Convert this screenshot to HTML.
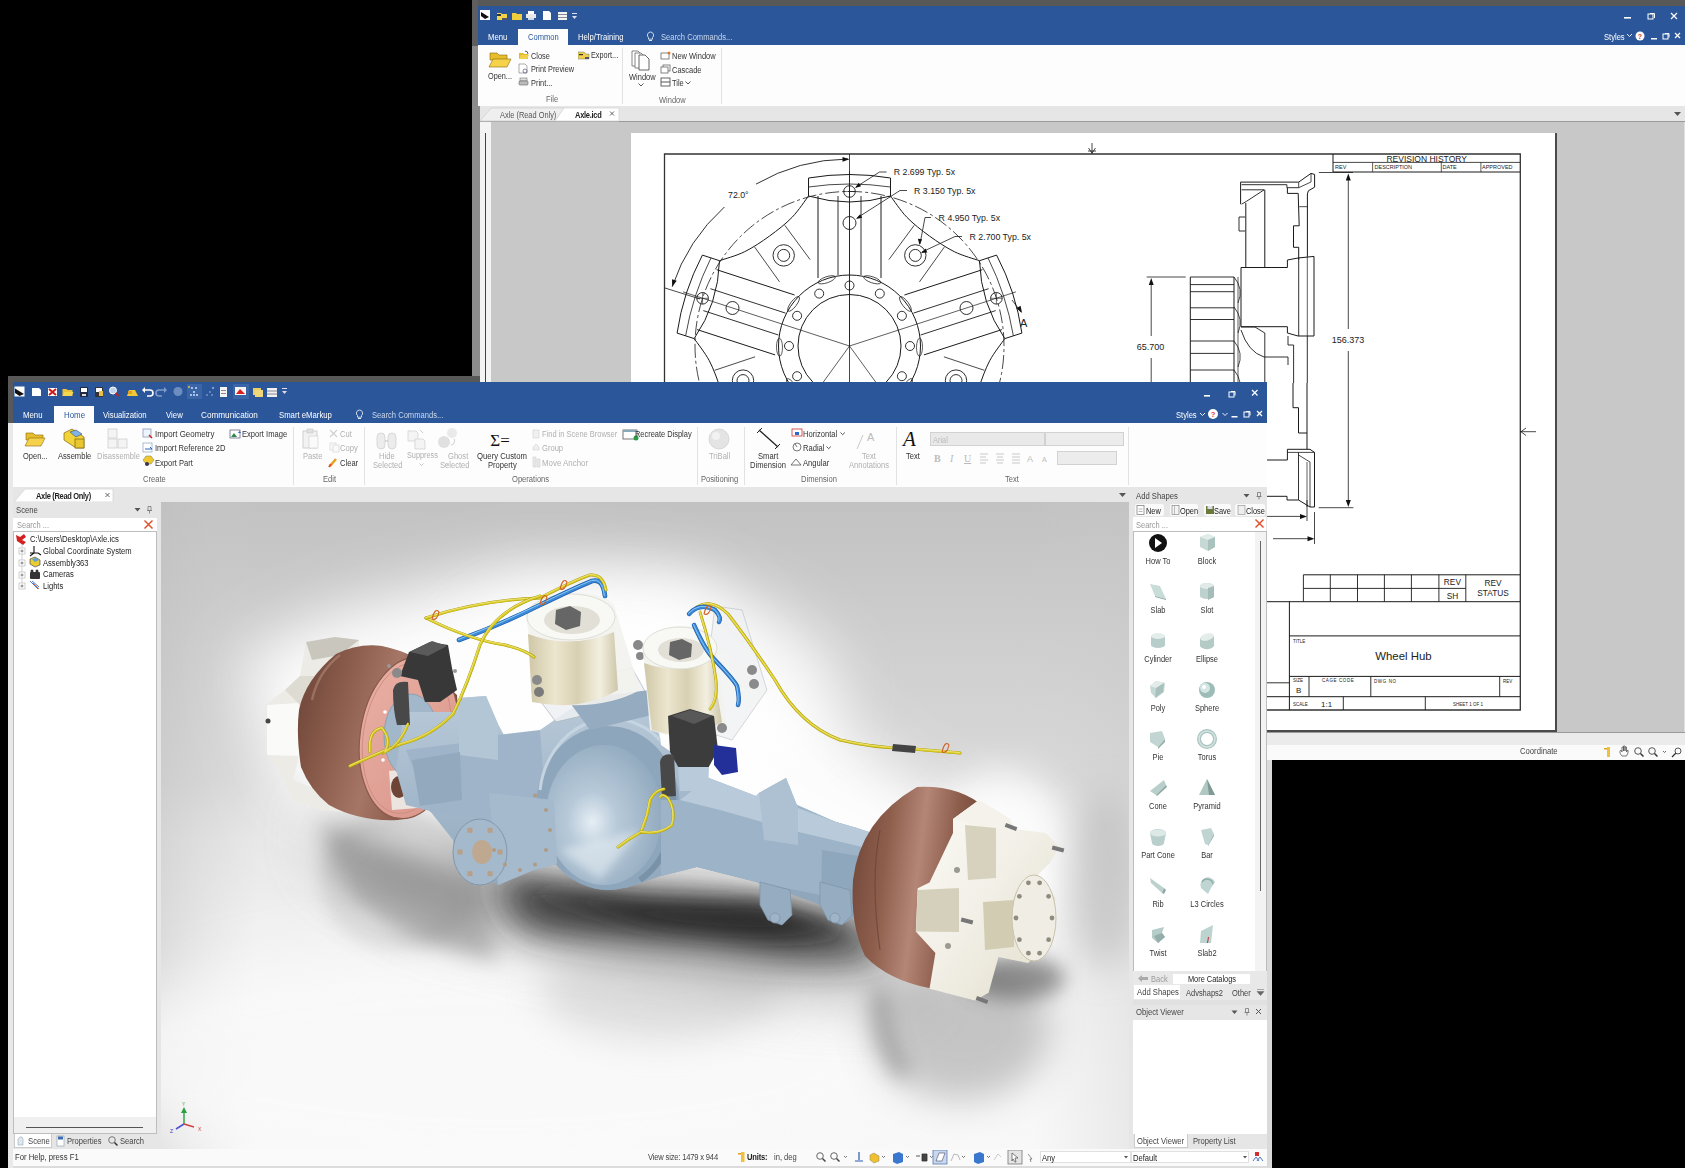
<!DOCTYPE html>
<html><head><meta charset="utf-8">
<style>
html,body{margin:0;padding:0}
body{width:1685px;height:1168px;background:#000;position:relative;overflow:hidden;font-family:"Liberation Sans",sans-serif;font-size:8px;color:#222}
.a{position:absolute}
.t{position:absolute;white-space:nowrap}
</style></head><body>
<div class="a" style="left:472px;top:0px;width:1213px;height:760px;background:#8c8c8c;"></div>
<div class="a" style="left:472px;top:0px;width:1213px;height:6px;background:#585858;"></div>
<div class="a" style="left:472px;top:0px;width:6px;height:46px;background:#5e5e5e;"></div>
<div class="a" style="left:478px;top:6px;width:1207px;height:39px;background:#2b579a;"></div>
<div class="a" style="left:478px;top:45px;width:1207px;height:61px;background:#fdfdfd;"></div>
<div class="a" style="left:480px;top:106px;width:1205px;height:15px;background:#e6e6e6;"></div>
<div class="a" style="left:480px;top:121px;width:1205px;height:1px;background:#9a9a9a;"></div>
<div class="a" style="left:480px;top:122px;width:1204px;height:610px;background:#c8c8c8;"></div>
<div class="a" style="left:1684px;top:122px;width:1px;height:610px;background:#e0e0e0;"></div>
<div class="a" style="left:480px;top:122px;width:11px;height:610px;background:#f4f4f4;"></div>
<div class="a" style="left:485px;top:133px;width:1px;height:599px;background:#444;"></div>
<div class="a" style="left:631px;top:133px;width:924px;height:598px;background:#fff;"></div>
<div class="a" style="left:1555px;top:133px;width:2px;height:599px;background:#4a4a4a;"></div>
<div class="a" style="left:631px;top:730px;width:926px;height:2px;background:#4a4a4a;"></div>
<div class="a" style="left:480px;top:732px;width:1205px;height:1px;background:#9a9a9a;"></div>
<div class="a" style="left:480px;top:733px;width:1205px;height:12px;background:#ebebeb;"></div>
<div class="a" style="left:480px;top:745px;width:1205px;height:15px;background:#fafafa;"></div>
<svg class="a" style="left:478px;top:8px" width="110" height="16" viewBox="0 0 110 16">
<rect x="2" y="2" width="10" height="10" fill="#fff"/><path d="M3 4 L11 9 L7 11 L3 8Z" fill="#111"/>
<path d="M19 5h4l1 1h5v6h-10z" fill="#f3d34a"/><rect x="19" y="6" width="4" height="2" fill="#333"/><rect x="24" y="10" width="5" height="2" fill="#556"/>
<path d="M34 5h4l1 1h5v6h-10z" fill="#f0cd3c"/>
<rect x="50" y="3" width="6" height="3" fill="#fff"/><rect x="48" y="6" width="10" height="4" fill="#e8e8e8"/><rect x="50" y="10" width="6" height="2" fill="#cfd8e8"/>
<path d="M65 3h6l2 2v7h-8z" fill="#fff"/>
<rect x="80" y="4" width="9" height="8" fill="#f2f2f2"/><rect x="80" y="6" width="9" height="1" fill="#889"/><rect x="80" y="9" width="9" height="1" fill="#889"/>
<rect x="94" y="5" width="5" height="1" fill="#dde"/><path d="M94 8h5l-2.5 3z" fill="#dde"/>
</svg>
<svg class="a" style="left:1620px;top:8px" width="65" height="40" viewBox="0 0 65 40">
<rect x="4" y="9" width="7" height="1.6" fill="#fff"/>
<rect x="28" y="6" width="5" height="5" fill="none" stroke="#fff" stroke-width="1"/><path d="M30 5.5h4.5v4.5" fill="none" stroke="#fff"/>
<path d="M51 5l6 6M57 5l-6 6" stroke="#fff" stroke-width="1.2"/>
<path d="M7 26l2.5 2.5 2.5-2.5" fill="none" stroke="#fff" stroke-width="0.9"/>
<circle cx="20" cy="28" r="4.5" fill="#fff"/><text x="20" y="31" font-size="7" text-anchor="middle" fill="#d33" font-family="Liberation Sans" font-weight="bold">?</text>
<rect x="31" y="30" width="6" height="1.5" fill="#fff"/>
<rect x="43" y="26" width="5" height="5" fill="none" stroke="#fff" stroke-width="1"/><path d="M45 25.5h4v4" fill="none" stroke="#fff"/>
<path d="M55 25l5 5M60 25l-5 5" stroke="#fff" stroke-width="1.2"/>
</svg>
<div class="t" style="left:1604px;top:31.9px;font-size:8.51px;line-height:10px;color:#fff;transform:scaleX(0.8929);transform-origin:0 50%;">Styles</div>
<div class="t" style="left:488px;top:31.9px;font-size:8.62px;line-height:10px;color:#fff;transform:scaleX(0.8929);transform-origin:0 50%;">Menu</div>
<div class="a" style="left:518px;top:29px;width:50px;height:16px;background:#fdfdfd;"></div>
<div class="t" style="left:528px;top:32.2px;font-size:8.51px;line-height:10px;color:#2b579a;transform:scaleX(0.8929);transform-origin:0 50%;">Common</div>
<div class="t" style="left:578px;top:31.9px;font-size:8.62px;line-height:10px;color:#fff;transform:scaleX(0.8929);transform-origin:0 50%;">Help/Training</div>
<svg class="a" style="left:646px;top:31px" width="9" height="11"><path d="M4.5 1a3.2 3.2 0 0 1 2 5.6v1.6h-4v-1.6a3.2 3.2 0 0 1 2-5.6z" fill="none" stroke="#dfe6f3" stroke-width="0.9"/><rect x="3" y="9" width="3" height="1" fill="#dfe6f3"/></svg>
<div class="t" style="left:661px;top:31.9px;font-size:8.51px;line-height:10px;color:#c9d6ec;transform:scaleX(0.8929);transform-origin:0 50%;">Search Commands...</div>
<svg class="a" style="left:488px;top:50px" width="24" height="20" viewBox="0 0 24 20">
<path d="M2 3h7l2 2h8v5H2z" fill="#e7bd2c" stroke="#8a6a10" stroke-width="0.6"/>
<path d="M1 17l4-8h18l-4 8z" fill="#f5d24a" stroke="#8a6a10" stroke-width="0.6"/></svg>
<div class="t" style="left:488px;top:71.8px;font-size:8.18px;line-height:10px;color:#333;transform:scaleX(0.8929);transform-origin:0 50%;">Open...</div>
<svg class="a" style="left:518px;top:50px" width="12" height="40" viewBox="0 0 12 40">
<path d="M1 3h4l1 1h4v5H1z" fill="#e6bb2a"/><path d="M1 9l2-4h8l-2 4z" fill="#f3d04a"/><path d="M7 1a3 3 0 0 1 3 3" fill="none" stroke="#333" stroke-width="0.8"/>
<path d="M1 14h6l2 2v7H1z" fill="#fff" stroke="#888" stroke-width="0.7"/><circle cx="7" cy="21" r="2" fill="none" stroke="#557" stroke-width="0.7"/>
<rect x="2" y="28" width="7" height="3" fill="#ddd" stroke="#777" stroke-width="0.6"/><rect x="1" y="31" width="9" height="4" rx="1" fill="#bbb" stroke="#666" stroke-width="0.6"/>
</svg>
<div class="t" style="left:531px;top:50.7px;font-size:8.29px;line-height:10px;color:#333;transform:scaleX(0.8929);transform-origin:0 50%;">Close</div>
<div class="t" style="left:531px;top:64.5px;font-size:8.18px;line-height:10px;color:#333;transform:scaleX(0.8929);transform-origin:0 50%;">Print Preview</div>
<div class="t" style="left:531px;top:78.2px;font-size:8.29px;line-height:10px;color:#333;transform:scaleX(0.8929);transform-origin:0 50%;">Print...</div>
<svg class="a" style="left:578px;top:50px" width="12" height="10" viewBox="0 0 12 10">
<path d="M0 2h6l2 2h3v5H0z" fill="#f0d050" stroke="#776" stroke-width="0.5"/><rect x="1" y="4" width="4" height="1.2" fill="#333"/><rect x="7" y="7" width="4" height="2" fill="#556"/></svg>
<div class="t" style="left:590.5px;top:50.7px;font-size:8.18px;line-height:10px;color:#333;transform:scaleX(0.8929);transform-origin:0 50%;">Export...</div>
<div class="t" style="left:545.7px;top:94.2px;font-size:8.51px;line-height:10px;color:#666;transform:scaleX(0.8929);transform-origin:0 50%;">File</div>
<div class="a" style="left:622px;top:48px;width:1px;height:56px;background:#e2e2e2;"></div>
<svg class="a" style="left:630px;top:50px" width="24" height="22" viewBox="0 0 24 22">
<path d="M2 1h6l2 2v13H2z" fill="#fff" stroke="#666" stroke-width="0.8"/>
<path d="M5 3h6l2 2v13H5z" fill="#fff" stroke="#666" stroke-width="0.8"/>
<path d="M9 5h6l4 4v11H9z" fill="#fff" stroke="#555" stroke-width="0.9"/></svg>
<div class="t" style="left:628.5px;top:71.9px;font-size:8.40px;line-height:10px;color:#333;transform:scaleX(0.8929);transform-origin:0 50%;">Window</div>
<svg class="a" style="left:638px;top:83px" width="6" height="4"><path d="M0.5 0.5l2.5 2.5 2.5-2.5" fill="none" stroke="#444" stroke-width="0.9"/></svg>
<svg class="a" style="left:660px;top:50px" width="12" height="40" viewBox="0 0 12 40">
<rect x="1" y="3" width="8" height="6" fill="#fff" stroke="#666" stroke-width="0.8"/><circle cx="9" cy="3" r="1.5" fill="#e07a2a"/>
<rect x="3" y="15" width="7" height="6" fill="#fff" stroke="#666" stroke-width="0.8"/><rect x="1" y="17" width="7" height="6" fill="#fff" stroke="#666" stroke-width="0.8"/>
<rect x="1" y="28" width="9" height="8" fill="#fff" stroke="#555" stroke-width="0.9"/><rect x="1" y="31.5" width="9" height="1" fill="#555"/></svg>
<div class="t" style="left:671.6px;top:50.5px;font-size:8.40px;line-height:10px;color:#333;transform:scaleX(0.8929);transform-origin:0 50%;">New Window</div>
<div class="t" style="left:671.6px;top:64.5px;font-size:8.40px;line-height:10px;color:#333;transform:scaleX(0.8929);transform-origin:0 50%;">Cascade</div>
<div class="t" style="left:671.6px;top:78.2px;font-size:8.40px;line-height:10px;color:#333;transform:scaleX(0.8929);transform-origin:0 50%;">Tile</div>
<svg class="a" style="left:685px;top:81px" width="6" height="4"><path d="M0.5 0.5l2.5 2.5 2.5-2.5" fill="none" stroke="#444" stroke-width="0.9"/></svg>
<div class="t" style="left:658.5px;top:94.7px;font-size:8.40px;line-height:10px;color:#666;transform:scaleX(0.8929);transform-origin:0 50%;">Window</div>
<div class="a" style="left:721px;top:48px;width:1px;height:56px;background:#e2e2e2;"></div>
<svg class="a" style="left:478px;top:106px" width="150" height="16" viewBox="0 0 150 16">
<path d="M2 15L13 2H86L77 15z" fill="#efefef" stroke="#cfcfcf" stroke-width="0.8"/>
<path d="M77 15L86 2H141V15z" fill="#fff" stroke="#d8d8d8" stroke-width="0.8"/>
<path d="M132 5.5l4 4M136 5.5l-4 4" stroke="#555" stroke-width="0.9"/></svg>
<div class="t" style="left:500px;top:110.2px;font-size:8.29px;line-height:10px;color:#555;transform:scaleX(0.8929);transform-origin:0 50%;">Axle (Read Only)</div>
<div class="t" style="left:575px;top:110.2px;font-size:8.40px;line-height:10px;color:#222;transform:scaleX(0.8929);transform-origin:0 50%;font-weight:bold;letter-spacing:-0.3px">Axle.icd</div>
<svg class="a" style="left:1674px;top:112px" width="8" height="5"><path d="M0 0h7l-3.5 4z" fill="#555"/></svg>
<div class="t" style="left:1520px;top:746.4px;font-size:8.62px;line-height:10px;color:#444;transform:scaleX(0.8929);transform-origin:0 50%;">Coordinate</div>
<svg class="a" style="left:1600px;top:745px" width="85" height="14" viewBox="0 0 85 14">
<rect x="7" y="2" width="3" height="10" fill="#f0c040"/><rect x="4" y="3" width="3" height="1.5" fill="#e0a020"/>
<path d="M22 11c-2-2-3-5-1-6l1 2v-5h1.5v4v-5h1.5v5v-4h1.5v5l1-2c1 0 1 3-1 6z" fill="none" stroke="#555" stroke-width="0.8"/>
<circle cx="38" cy="6" r="3.3" fill="none" stroke="#555" stroke-width="1"/><path d="M40.5 8.5l3 3" stroke="#333" stroke-width="1.5"/>
<circle cx="52" cy="6" r="3.3" fill="none" stroke="#555" stroke-width="1"/><path d="M54.5 8.5l3 3" stroke="#333" stroke-width="1.5"/>
<path d="M63 6l1.5 1.5 1.5-1.5" fill="none" stroke="#444" stroke-width="0.8"/>
<circle cx="78" cy="6" r="3" fill="none" stroke="#555" stroke-width="1"/><path d="M76 8l-4 4" stroke="#333" stroke-width="1.3"/>
</svg>
<svg class="a" style="left:631px;top:133px" width="924" height="598" viewBox="631 133 924 598"><path d="M664.5 383.0 L664.5 154.0 L1520.3 154.0 L1520.3 710.0 L1267.0 710.0" fill="none" stroke="#333" stroke-width="1.3"/><path d="M1092.0 143.0 L1092.0 154.0" fill="none" stroke="#1a1a1a" stroke-width="0.8"/><path d="M1088.5 148 L1092 153 L1095.5 148" fill="none" stroke="#1a1a1a" stroke-width="0.8"/><path d="M1088.0 151.0 L1096.0 151.0" fill="none" stroke="#1a1a1a" stroke-width="0.8"/><path d="M1520.0 431.7 L1536.0 431.7" fill="none" stroke="#1a1a1a" stroke-width="0.8"/><path d="M1526 428 L1521 431.7 L1526 435.5" fill="none" stroke="#1a1a1a" stroke-width="0.8"/><path d="M672.2 286.7 A187 187 0 0 1 724.4 207.0" fill="none" stroke="#1a1a1a" stroke-width="0.9"/><path d="M756.0 184.1 A187 187 0 0 1 847.9 159.0" fill="none" stroke="#1a1a1a" stroke-width="0.9"/><path d="M849.5 159.3 L842.5 161.8 L842.5 156.9Z" fill="#111"/><path d="M672.2 286.7 L672.0 279.2 L676.7 280.8Z" fill="#111"/><text x="728" y="198.4" font-size="8.8" text-anchor="start" fill="#222" font-family="Liberation Sans" >72.0°</text><path d="M664.7 287.9 L700.0 299.0" fill="none" stroke="#1a1a1a" stroke-width="0.8"/><path d="M849.5 154.0 L849.5 383.0" fill="none" stroke="#1a1a1a" stroke-width="0.8"/><path d="M715.7 423.2 A154.5 154.5 0 1 1 983.3 423.2" fill="none" stroke="#1a1a1a" stroke-width="0.8" stroke-dasharray="14 3 3 3"/><circle cx="849.5" cy="346.0" r="71.0" fill="none" stroke="#1a1a1a" stroke-width="1.0"/><circle cx="849.5" cy="346.0" r="51.5" fill="none" stroke="#1a1a1a" stroke-width="1.0"/><circle cx="849.5" cy="285.5" r="4.5" fill="none" stroke="#1a1a1a" stroke-width="0.9"/><circle cx="879.8" cy="293.6" r="4.5" fill="none" stroke="#1a1a1a" stroke-width="0.9"/><circle cx="901.9" cy="315.8" r="4.5" fill="none" stroke="#1a1a1a" stroke-width="0.9"/><circle cx="910.0" cy="346.0" r="4.5" fill="none" stroke="#1a1a1a" stroke-width="0.9"/><circle cx="901.9" cy="376.2" r="4.5" fill="none" stroke="#1a1a1a" stroke-width="0.9"/><circle cx="879.8" cy="398.4" r="4.5" fill="none" stroke="#1a1a1a" stroke-width="0.9"/><circle cx="849.5" cy="406.5" r="4.5" fill="none" stroke="#1a1a1a" stroke-width="0.9"/><circle cx="819.2" cy="398.4" r="4.5" fill="none" stroke="#1a1a1a" stroke-width="0.9"/><circle cx="797.1" cy="376.2" r="4.5" fill="none" stroke="#1a1a1a" stroke-width="0.9"/><circle cx="789.0" cy="346.0" r="4.5" fill="none" stroke="#1a1a1a" stroke-width="0.9"/><circle cx="797.1" cy="315.8" r="4.5" fill="none" stroke="#1a1a1a" stroke-width="0.9"/><circle cx="819.2" cy="293.6" r="4.5" fill="none" stroke="#1a1a1a" stroke-width="0.9"/><ellipse cx="826.7" cy="279.8" rx="9" ry="3" transform="rotate(-19.0 826.7 279.8)" fill="none" stroke="#1a1a1a" stroke-width="0.7"/><ellipse cx="872.3" cy="279.8" rx="9" ry="3" transform="rotate(19.0 872.3 279.8)" fill="none" stroke="#1a1a1a" stroke-width="0.7"/><ellipse cx="905.4" cy="303.9" rx="9" ry="3" transform="rotate(53.0 905.4 303.9)" fill="none" stroke="#1a1a1a" stroke-width="0.7"/><ellipse cx="919.5" cy="347.2" rx="9" ry="3" transform="rotate(91.0 919.5 347.2)" fill="none" stroke="#1a1a1a" stroke-width="0.7"/><ellipse cx="906.8" cy="386.2" rx="9" ry="3" transform="rotate(125.0 906.8 386.2)" fill="none" stroke="#1a1a1a" stroke-width="0.7"/><ellipse cx="870.0" cy="412.9" rx="9" ry="3" transform="rotate(163.0 870.0 412.9)" fill="none" stroke="#1a1a1a" stroke-width="0.7"/><ellipse cx="829.0" cy="412.9" rx="9" ry="3" transform="rotate(197.0 829.0 412.9)" fill="none" stroke="#1a1a1a" stroke-width="0.7"/><ellipse cx="792.2" cy="386.2" rx="9" ry="3" transform="rotate(235.0 792.2 386.2)" fill="none" stroke="#1a1a1a" stroke-width="0.7"/><ellipse cx="779.5" cy="347.2" rx="9" ry="3" transform="rotate(269.0 779.5 347.2)" fill="none" stroke="#1a1a1a" stroke-width="0.7"/><ellipse cx="793.6" cy="303.9" rx="9" ry="3" transform="rotate(307.0 793.6 303.9)" fill="none" stroke="#1a1a1a" stroke-width="0.7"/><path d="M849.5 346.0 L849.5 171.0" fill="none" stroke="#1a1a1a" stroke-width="0.7"/><path d="M849.5 346.0 L1015.9 291.9" fill="none" stroke="#1a1a1a" stroke-width="0.7"/><path d="M849.5 346.0 L952.4 487.6" fill="none" stroke="#1a1a1a" stroke-width="0.7"/><path d="M849.5 346.0 L746.6 487.6" fill="none" stroke="#1a1a1a" stroke-width="0.7"/><path d="M849.5 346.0 L683.1 291.9" fill="none" stroke="#1a1a1a" stroke-width="0.7"/><path d="M818.0 278.0 L818.0 196.0" fill="none" stroke="#1a1a1a" stroke-width="1.0"/><path d="M881.0 278.0 L881.0 196.0" fill="none" stroke="#1a1a1a" stroke-width="1.0"/><path d="M838.0 275.0 L838.0 196.0" fill="none" stroke="#1a1a1a" stroke-width="0.9"/><path d="M861.0 275.0 L861.0 196.0" fill="none" stroke="#1a1a1a" stroke-width="0.9"/><path d="M808.5 196.0 L808.5 178.0" fill="none" stroke="#1a1a1a" stroke-width="1.0"/><path d="M890.5 196.0 L890.5 178.0" fill="none" stroke="#1a1a1a" stroke-width="1.0"/><path d="M808.5 178.0 Q849.5 171.0 890.5 178.0" fill="none" stroke="#1a1a1a" stroke-width="1.0"/><path d="M808.5 187.0 Q849.5 181.0 890.5 187.0" fill="none" stroke="#1a1a1a" stroke-width="0.8"/><path d="M808.5 196.0 Q849.5 208.0 890.5 196.0" fill="none" stroke="#1a1a1a" stroke-width="1.0"/><circle cx="849.5" cy="191.5" r="5.8" fill="none" stroke="#1a1a1a" stroke-width="0.9"/><path d="M843.7 191.5 L855.3 191.5" fill="none" stroke="#1a1a1a" stroke-width="0.6"/><path d="M849.5 185.7 L849.5 197.3" fill="none" stroke="#1a1a1a" stroke-width="0.6"/><circle cx="849.5" cy="223.0" r="6.5" fill="none" stroke="#1a1a1a" stroke-width="0.9"/><path d="M904.4 295.0 L982.4 269.7" fill="none" stroke="#1a1a1a" stroke-width="1.0"/><path d="M923.9 354.9 L1001.9 329.6" fill="none" stroke="#1a1a1a" stroke-width="1.0"/><path d="M913.5 313.1 L988.6 288.7" fill="none" stroke="#1a1a1a" stroke-width="0.9"/><path d="M920.6 335.0 L995.7 310.6" fill="none" stroke="#1a1a1a" stroke-width="0.9"/><path d="M979.5 260.7 L996.6 255.1" fill="none" stroke="#1a1a1a" stroke-width="1.0"/><path d="M1004.8 338.6 L1021.9 333.1" fill="none" stroke="#1a1a1a" stroke-width="1.0"/><path d="M996.6 255.1 Q1015.9 291.9 1021.9 333.1" fill="none" stroke="#1a1a1a" stroke-width="1.0"/><path d="M988.0 257.9 Q1006.4 295.0 1013.4 335.9" fill="none" stroke="#1a1a1a" stroke-width="0.8"/><path d="M979.5 260.7 Q980.7 303.4 1004.8 338.6" fill="none" stroke="#1a1a1a" stroke-width="1.0"/><circle cx="996.4" cy="298.3" r="5.8" fill="none" stroke="#1a1a1a" stroke-width="0.9"/><path d="M990.6 298.3 L1002.2 298.3" fill="none" stroke="#1a1a1a" stroke-width="0.6"/><path d="M996.4 292.5 L996.4 304.1" fill="none" stroke="#1a1a1a" stroke-width="0.6"/><circle cx="966.5" cy="308.0" r="6.5" fill="none" stroke="#1a1a1a" stroke-width="0.9"/><path d="M915.0 382.5 L963.2 448.8" fill="none" stroke="#1a1a1a" stroke-width="1.0"/><path d="M864.0 419.5 L912.2 485.9" fill="none" stroke="#1a1a1a" stroke-width="1.0"/><path d="M900.5 396.7 L947.0 460.6" fill="none" stroke="#1a1a1a" stroke-width="0.9"/><path d="M881.9 410.2 L928.4 474.1" fill="none" stroke="#1a1a1a" stroke-width="0.9"/><path d="M970.8 443.3 L981.4 457.8" fill="none" stroke="#1a1a1a" stroke-width="1.0"/><path d="M904.5 491.5 L915.1 506.0" fill="none" stroke="#1a1a1a" stroke-width="1.0"/><path d="M981.4 457.8 Q952.4 487.6 915.1 506.0" fill="none" stroke="#1a1a1a" stroke-width="1.0"/><path d="M976.1 450.5 Q946.5 479.5 909.8 498.7" fill="none" stroke="#1a1a1a" stroke-width="0.8"/><path d="M970.8 443.3 Q930.6 457.6 904.5 491.5" fill="none" stroke="#1a1a1a" stroke-width="1.0"/><circle cx="940.3" cy="471.0" r="5.8" fill="none" stroke="#1a1a1a" stroke-width="0.9"/><path d="M934.5 471.0 L946.1 471.0" fill="none" stroke="#1a1a1a" stroke-width="0.6"/><path d="M940.3 465.2 L940.3 476.8" fill="none" stroke="#1a1a1a" stroke-width="0.6"/><circle cx="921.8" cy="445.5" r="6.5" fill="none" stroke="#1a1a1a" stroke-width="0.9"/><path d="M835.0 419.5 L786.8 485.9" fill="none" stroke="#1a1a1a" stroke-width="1.0"/><path d="M784.0 382.5 L735.8 448.8" fill="none" stroke="#1a1a1a" stroke-width="1.0"/><path d="M817.1 410.2 L770.6 474.1" fill="none" stroke="#1a1a1a" stroke-width="0.9"/><path d="M798.5 396.7 L752.0 460.6" fill="none" stroke="#1a1a1a" stroke-width="0.9"/><path d="M794.5 491.5 L783.9 506.0" fill="none" stroke="#1a1a1a" stroke-width="1.0"/><path d="M728.2 443.3 L717.6 457.8" fill="none" stroke="#1a1a1a" stroke-width="1.0"/><path d="M783.9 506.0 Q746.6 487.6 717.6 457.8" fill="none" stroke="#1a1a1a" stroke-width="1.0"/><path d="M789.2 498.7 Q752.5 479.5 722.9 450.5" fill="none" stroke="#1a1a1a" stroke-width="0.8"/><path d="M794.5 491.5 Q768.4 457.6 728.2 443.3" fill="none" stroke="#1a1a1a" stroke-width="1.0"/><circle cx="758.7" cy="471.0" r="5.8" fill="none" stroke="#1a1a1a" stroke-width="0.9"/><path d="M752.9 471.0 L764.5 471.0" fill="none" stroke="#1a1a1a" stroke-width="0.6"/><path d="M758.7 465.2 L758.7 476.8" fill="none" stroke="#1a1a1a" stroke-width="0.6"/><circle cx="777.2" cy="445.5" r="6.5" fill="none" stroke="#1a1a1a" stroke-width="0.9"/><path d="M775.1 354.9 L697.1 329.6" fill="none" stroke="#1a1a1a" stroke-width="1.0"/><path d="M794.6 295.0 L716.6 269.7" fill="none" stroke="#1a1a1a" stroke-width="1.0"/><path d="M778.4 335.0 L703.3 310.6" fill="none" stroke="#1a1a1a" stroke-width="0.9"/><path d="M785.5 313.1 L710.4 288.7" fill="none" stroke="#1a1a1a" stroke-width="0.9"/><path d="M694.2 338.6 L677.1 333.1" fill="none" stroke="#1a1a1a" stroke-width="1.0"/><path d="M719.5 260.7 L702.4 255.1" fill="none" stroke="#1a1a1a" stroke-width="1.0"/><path d="M677.1 333.1 Q683.1 291.9 702.4 255.1" fill="none" stroke="#1a1a1a" stroke-width="1.0"/><path d="M685.6 335.9 Q692.6 295.0 711.0 257.9" fill="none" stroke="#1a1a1a" stroke-width="0.8"/><path d="M694.2 338.6 Q718.3 303.4 719.5 260.7" fill="none" stroke="#1a1a1a" stroke-width="1.0"/><circle cx="702.6" cy="298.3" r="5.8" fill="none" stroke="#1a1a1a" stroke-width="0.9"/><path d="M696.8 298.3 L708.4 298.3" fill="none" stroke="#1a1a1a" stroke-width="0.6"/><path d="M702.6 292.5 L702.6 304.1" fill="none" stroke="#1a1a1a" stroke-width="0.6"/><circle cx="732.5" cy="308.0" r="6.5" fill="none" stroke="#1a1a1a" stroke-width="0.9"/><path d="M890.5 196.0 C893.2 199.5 900.4 210.5 906.8 217.2 C913.3 223.9 921.5 230.2 929.4 236.0 C937.3 241.7 945.9 247.5 954.3 251.7 C962.6 255.8 975.3 259.2 979.5 260.7" fill="none" stroke="#1a1a1a" stroke-width="1.0"/><circle cx="915.3" cy="255.4" r="10.7" fill="none" stroke="#1a1a1a" stroke-width="0.9"/><circle cx="915.3" cy="255.4" r="6.0" fill="none" stroke="#1a1a1a" stroke-width="0.9"/><path d="M919.5 281.8 L944.3 247.1" fill="none" stroke="#1a1a1a" stroke-width="0.8"/><path d="M888.9 259.6 L914.2 225.3" fill="none" stroke="#1a1a1a" stroke-width="0.8"/><path d="M1004.8 338.6 C1002.3 342.3 994.1 352.5 989.7 360.7 C985.4 369.0 981.9 378.7 978.8 388.0 C975.8 397.3 972.9 407.3 971.6 416.5 C970.3 425.7 971.0 438.8 970.8 443.3" fill="none" stroke="#1a1a1a" stroke-width="1.0"/><circle cx="956.0" cy="380.6" r="10.7" fill="none" stroke="#1a1a1a" stroke-width="0.9"/><circle cx="956.0" cy="380.6" r="6.0" fill="none" stroke="#1a1a1a" stroke-width="0.9"/><path d="M932.2 392.8 L972.8 405.6" fill="none" stroke="#1a1a1a" stroke-width="0.8"/><path d="M943.9 356.8 L984.3 370.3" fill="none" stroke="#1a1a1a" stroke-width="0.8"/><path d="M904.5 491.5 C900.2 490.2 888.0 485.5 878.8 483.9 C869.6 482.3 859.3 482.0 849.5 482.0 C839.7 482.0 829.4 482.3 820.2 483.9 C811.0 485.5 798.8 490.2 794.5 491.5" fill="none" stroke="#1a1a1a" stroke-width="1.0"/><circle cx="849.5" cy="458.0" r="10.7" fill="none" stroke="#1a1a1a" stroke-width="0.9"/><circle cx="849.5" cy="458.0" r="6.0" fill="none" stroke="#1a1a1a" stroke-width="0.9"/><path d="M830.6 439.1 L830.9 481.7" fill="none" stroke="#1a1a1a" stroke-width="0.8"/><path d="M868.4 439.1 L868.1 481.7" fill="none" stroke="#1a1a1a" stroke-width="0.8"/><path d="M728.2 443.3 C728.0 438.8 728.7 425.7 727.4 416.5 C726.1 407.3 723.2 397.3 720.2 388.0 C717.1 378.7 713.6 369.0 709.3 360.7 C704.9 352.5 696.7 342.3 694.2 338.6" fill="none" stroke="#1a1a1a" stroke-width="1.0"/><circle cx="743.0" cy="380.6" r="10.7" fill="none" stroke="#1a1a1a" stroke-width="0.9"/><circle cx="743.0" cy="380.6" r="6.0" fill="none" stroke="#1a1a1a" stroke-width="0.9"/><path d="M755.1 356.8 L714.7 370.3" fill="none" stroke="#1a1a1a" stroke-width="0.8"/><path d="M766.8 392.8 L726.2 405.6" fill="none" stroke="#1a1a1a" stroke-width="0.8"/><path d="M719.5 260.7 C723.7 259.2 736.4 255.8 744.7 251.7 C753.1 247.5 761.7 241.7 769.6 236.0 C777.5 230.2 785.7 223.9 792.2 217.2 C798.6 210.5 805.8 199.5 808.5 196.0" fill="none" stroke="#1a1a1a" stroke-width="1.0"/><circle cx="783.7" cy="255.4" r="10.7" fill="none" stroke="#1a1a1a" stroke-width="0.9"/><circle cx="783.7" cy="255.4" r="6.0" fill="none" stroke="#1a1a1a" stroke-width="0.9"/><path d="M810.1 259.6 L784.8 225.3" fill="none" stroke="#1a1a1a" stroke-width="0.8"/><path d="M779.5 281.8 L754.7 247.1" fill="none" stroke="#1a1a1a" stroke-width="0.8"/><text x="893.7" y="175.3" font-size="8.8" text-anchor="start" fill="#222" font-family="Liberation Sans" >R 2.699 Typ. 5x</text><text x="914" y="193.7" font-size="8.8" text-anchor="start" fill="#222" font-family="Liberation Sans" >R 3.150 Typ. 5x</text><text x="938.6" y="221.2" font-size="8.8" text-anchor="start" fill="#222" font-family="Liberation Sans" >R 4.950 Typ. 5x</text><text x="969.5" y="240.2" font-size="8.8" text-anchor="start" fill="#222" font-family="Liberation Sans" >R 2.700 Typ. 5x</text><path d="M886.6 172.0 L879.5 172.0 L856.0 187.0" fill="none" stroke="#1a1a1a" stroke-width="0.8"/><path d="M855.0 188.0 L858.7 182.8 L861.1 186.3Z" fill="#111"/><path d="M907.0 190.5 L900.0 190.5 L857.0 218.0" fill="none" stroke="#1a1a1a" stroke-width="0.8"/><path d="M856.0 219.0 L860.1 214.2 L862.2 217.8Z" fill="#111"/><path d="M931.0 217.5 L925.0 217.5 L920.0 244.0" fill="none" stroke="#1a1a1a" stroke-width="0.8"/><path d="M919.5 245.0 L917.9 238.8 L922.1 239.2Z" fill="#111"/><path d="M962.0 236.5 L955.0 236.5 L922.0 252.0" fill="none" stroke="#1a1a1a" stroke-width="0.8"/><path d="M921.0 253.0 L925.6 248.6 L927.3 252.4Z" fill="#111"/><text x="1020" y="327.0" font-size="11" text-anchor="start" fill="#222" font-family="Liberation Sans" >A</text><path d="M1012.0 300.0 L1021.0 312.0" fill="none" stroke="#1a1a1a" stroke-width="0.8"/><path d="M1022.0 313.0 L1016.4 308.2 L1020.6 305.7Z" fill="#111"/><path d="M1240.6 204.2 L1240.6 182.1 L1298.7 182.1 L1311.0 173.4 L1314.6 174.4 L1314.6 187.2 L1308.4 190.8 L1307.4 193.9 L1307.4 256.6" fill="none" stroke="#1a1a1a" stroke-width="1.0"/><path d="M1298.7 182.1 L1298.7 187.7" fill="none" stroke="#1a1a1a" stroke-width="0.8"/><path d="M1311.0 173.4 L1311.0 182.0 L1298.7 187.7" fill="none" stroke="#1a1a1a" stroke-width="0.8"/><path d="M1241.6 184.7 L1286.9 184.7 L1286.9 187.7 L1298.7 187.7" fill="none" stroke="#1a1a1a" stroke-width="0.9"/><path d="M1287.4 187.7 L1287.4 193.4 L1298.2 193.4 L1299.2 225.8 L1293.5 225.8 L1293.5 247.3 L1298.7 247.3 L1298.7 259.7" fill="none" stroke="#1a1a1a" stroke-width="1.0"/><path d="M1299.2 206.7 L1307.4 206.7" fill="none" stroke="#1a1a1a" stroke-width="0.8"/><path d="M1241.6 189.8 L1264.2 189.8 L1246.8 201.1 L1241.6 204.2" fill="none" stroke="#1a1a1a" stroke-width="0.9"/><path d="M1245.8 203.0 L1245.8 267.4" fill="none" stroke="#1a1a1a" stroke-width="1.0"/><path d="M1264.8 189.8 L1264.8 267.4" fill="none" stroke="#1a1a1a" stroke-width="1.0"/><path d="M1245.2 217.0 L1239.0 217.0 L1239.0 231.0 L1245.2 231.0" fill="none" stroke="#1a1a1a" stroke-width="0.9"/><path d="M1241.0 267.5 L1287.4 267.5 L1287.4 260.0 L1298.0 258.0 L1314.0 256.4 L1314.0 336.0 L1298.0 336.0 L1287.4 333.0 L1287.4 326.7 L1241.0 326.7 L1241.0 267.5" fill="none" stroke="#1a1a1a" stroke-width="1.0"/><path d="M1298.7 258.0 L1298.7 336.0" fill="none" stroke="#1a1a1a" stroke-width="0.9"/><path d="M1307.3 256.4 L1307.3 336.0" fill="none" stroke="#1a1a1a" stroke-width="0.7"/><path d="M1190.3 277.0 L1234.0 277.0" fill="none" stroke="#1a1a1a" stroke-width="0.9"/><path d="M1190.3 284.6 L1234.0 284.6" fill="none" stroke="#1a1a1a" stroke-width="0.9"/><path d="M1190.3 291.7 L1234.0 291.7" fill="none" stroke="#1a1a1a" stroke-width="0.9"/><path d="M1190.3 307.8 L1234.0 307.8" fill="none" stroke="#1a1a1a" stroke-width="0.9"/><path d="M1190.3 319.5 L1234.0 319.5" fill="none" stroke="#1a1a1a" stroke-width="0.9"/><path d="M1190.3 341.0 L1234.0 341.0" fill="none" stroke="#1a1a1a" stroke-width="0.9"/><path d="M1190.3 353.4 L1234.0 353.4" fill="none" stroke="#1a1a1a" stroke-width="0.9"/><path d="M1190.3 370.0 L1234.0 370.0" fill="none" stroke="#1a1a1a" stroke-width="0.9"/><path d="M1190.3 277.0 L1190.3 383.0" fill="none" stroke="#1a1a1a" stroke-width="1.0"/><path d="M1234.0 277.0 L1234.0 383.0" fill="none" stroke="#1a1a1a" stroke-width="1.0"/><path d="M1238.0 277.0 L1238.0 383.0" fill="none" stroke="#1a1a1a" stroke-width="0.7"/><path d="M1234 277 Q1244 289 1238 303" fill="none" stroke="#1a1a1a" stroke-width="0.8"/><path d="M1234 307 Q1244 319 1238 333" fill="none" stroke="#1a1a1a" stroke-width="0.8"/><path d="M1234 341 Q1244 353 1238 367" fill="none" stroke="#1a1a1a" stroke-width="0.8"/><path d="M1234 370 Q1244 382 1238 396" fill="none" stroke="#1a1a1a" stroke-width="0.8"/><path d="M1241.0 327.0 L1255.0 327.0 L1264.8 333.0 L1264.8 383.0" fill="none" stroke="#1a1a1a" stroke-width="0.9"/><path d="M1241 330 Q1248 352 1264 357 L1288 357 L1288 365" fill="none" stroke="#1a1a1a" stroke-width="0.9"/><path d="M1288.0 336.0 L1288.0 345.0 L1293.6 345.0 L1293.6 383.0" fill="none" stroke="#1a1a1a" stroke-width="0.9"/><path d="M1307.3 336.0 L1307.3 383.0" fill="none" stroke="#1a1a1a" stroke-width="0.9"/><path d="M1293.0 383.0 L1293.0 407.7 L1298.5 407.7 L1298.5 433.0 L1307.0 433.0 L1307.0 383.0" fill="none" stroke="#1a1a1a" stroke-width="1.0"/><path d="M1307.0 433.0 L1307.0 449.3" fill="none" stroke="#1a1a1a" stroke-width="1.0"/><path d="M1267.0 460.0 L1287.4 460.0 L1287.4 449.3 L1310.0 449.3 L1314.5 452.4 L1314.5 507.0 L1310.0 507.0" fill="none" stroke="#1a1a1a" stroke-width="1.0"/><path d="M1287.4 452.4 L1314.5 452.4" fill="none" stroke="#1a1a1a" stroke-width="0.8"/><path d="M1298.5 452.4 L1298.5 500.0" fill="none" stroke="#1a1a1a" stroke-width="0.9"/><path d="M1298.5 455.0 L1310.0 462.0 L1310.0 507.0" fill="none" stroke="#1a1a1a" stroke-width="0.8"/><path d="M1307.0 462.0 L1307.0 507.0" fill="none" stroke="#1a1a1a" stroke-width="0.7"/><path d="M1267.0 496.3 L1287.0 496.3 L1287.0 500.0 L1298.5 500.0 L1310.0 507.0" fill="none" stroke="#1a1a1a" stroke-width="1.0"/><path d="M1146.7 277.0 L1185.7 277.0" fill="none" stroke="#1a1a1a" stroke-width="0.8"/><path d="M1151.2 283.0 L1151.2 336.0" fill="none" stroke="#1a1a1a" stroke-width="0.8"/><path d="M1151.2 358.0 L1151.2 383.0" fill="none" stroke="#1a1a1a" stroke-width="0.8"/><path d="M1151.2 278.0 L1153.7 285.0 L1148.8 285.0Z" fill="#111"/><text x="1150.5" y="350.4" font-size="9" text-anchor="middle" fill="#222" font-family="Liberation Sans" >65.700</text><path d="M1318.8 172.5 L1353.0 172.5" fill="none" stroke="#1a1a1a" stroke-width="0.8"/><path d="M1348.3 179.0 L1348.3 329.0" fill="none" stroke="#1a1a1a" stroke-width="0.8"/><path d="M1348.3 351.0 L1348.3 500.0" fill="none" stroke="#1a1a1a" stroke-width="0.8"/><path d="M1348.3 173.5 L1350.8 180.5 L1345.8 180.5Z" fill="#111"/><path d="M1348.3 507.0 L1345.8 500.0 L1350.8 500.0Z" fill="#111"/><text x="1348" y="343.2" font-size="9" text-anchor="middle" fill="#222" font-family="Liberation Sans" >156.373</text><path d="M1318.6 507.7 L1353.4 507.7" fill="none" stroke="#1a1a1a" stroke-width="0.8"/><path d="M1267.0 516.4 L1301.0 516.4" fill="none" stroke="#1a1a1a" stroke-width="0.8"/><path d="M1307.0 516.4 L1300.0 518.9 L1300.0 513.9Z" fill="#111"/><path d="M1307.0 500.0 L1307.0 521.0" fill="none" stroke="#1a1a1a" stroke-width="0.8"/><path d="M1273.0 538.7 L1308.0 538.7" fill="none" stroke="#1a1a1a" stroke-width="0.8"/><path d="M1314.5 538.7 L1307.5 541.2 L1307.5 536.2Z" fill="#111"/><path d="M1314.5 512.0 L1314.5 544.0" fill="none" stroke="#1a1a1a" stroke-width="0.8"/><path d="M1333.0 172.0 L1333.0 154.0" fill="none" stroke="#1a1a1a" stroke-width="1.0"/><path d="M1333.0 162.4 L1520.0 162.4" fill="none" stroke="#1a1a1a" stroke-width="0.8"/><path d="M1333.0 172.0 L1520.0 172.0" fill="none" stroke="#1a1a1a" stroke-width="1.0"/><path d="M1372.6 162.4 L1372.6 172.0" fill="none" stroke="#1a1a1a" stroke-width="0.7"/><path d="M1441.3 162.4 L1441.3 172.0" fill="none" stroke="#1a1a1a" stroke-width="0.7"/><path d="M1480.9 162.4 L1480.9 172.0" fill="none" stroke="#1a1a1a" stroke-width="0.7"/><text x="1426.7" y="161.5" font-size="8.4" text-anchor="middle" fill="#222" font-family="Liberation Sans" textLength="80.5" lengthAdjust="spacingAndGlyphs">REVISION HISTORY</text><text x="1335" y="169.4" font-size="5.5" text-anchor="start" fill="#222" font-family="Liberation Sans" >REV</text><text x="1374.5" y="169.4" font-size="5.5" text-anchor="start" fill="#222" font-family="Liberation Sans" >DESCRIPTION</text><text x="1442.5" y="169.4" font-size="5.5" text-anchor="start" fill="#222" font-family="Liberation Sans" >DATE</text><text x="1482" y="169.4" font-size="5.5" text-anchor="start" fill="#222" font-family="Liberation Sans" >APPROVED</text><path d="M1303.4 574.8 L1520.0 574.8" fill="none" stroke="#1a1a1a" stroke-width="1.0"/><path d="M1303.4 588.4 L1465.8 588.4" fill="none" stroke="#1a1a1a" stroke-width="0.9"/><path d="M1267.0 601.7 L1520.0 601.7" fill="none" stroke="#1a1a1a" stroke-width="1.0"/><path d="M1303.4 574.8 L1303.4 601.7" fill="none" stroke="#1a1a1a" stroke-width="0.9"/><path d="M1330.3 574.8 L1330.3 601.7" fill="none" stroke="#1a1a1a" stroke-width="0.9"/><path d="M1357.5 574.8 L1357.5 601.7" fill="none" stroke="#1a1a1a" stroke-width="0.9"/><path d="M1384.4 574.8 L1384.4 601.7" fill="none" stroke="#1a1a1a" stroke-width="0.9"/><path d="M1411.4 574.8 L1411.4 601.7" fill="none" stroke="#1a1a1a" stroke-width="0.9"/><path d="M1438.9 574.8 L1438.9 601.7" fill="none" stroke="#1a1a1a" stroke-width="0.9"/><path d="M1465.8 574.8 L1465.8 601.7" fill="none" stroke="#1a1a1a" stroke-width="0.9"/><text x="1452.4" y="585.0" font-size="8.3" text-anchor="middle" fill="#222" font-family="Liberation Sans" >REV</text><text x="1452.4" y="598.5" font-size="8.3" text-anchor="middle" fill="#222" font-family="Liberation Sans" >SH</text><text x="1493" y="586.0" font-size="8.3" text-anchor="middle" fill="#222" font-family="Liberation Sans" >REV</text><text x="1493" y="596.0" font-size="8.3" text-anchor="middle" fill="#222" font-family="Liberation Sans" >STATUS</text><path d="M1289.4 601.7 L1289.4 710.0" fill="none" stroke="#1a1a1a" stroke-width="1.0"/><path d="M1289.4 635.9 L1520.0 635.9" fill="none" stroke="#1a1a1a" stroke-width="1.0"/><text x="1293" y="642.9" font-size="4.5" text-anchor="start" fill="#222" font-family="Liberation Sans" >TITLE</text><text x="1403.4" y="660.1" font-size="11.4" text-anchor="middle" fill="#222" font-family="Liberation Sans" >Wheel Hub</text><path d="M1289.4 676.4 L1520.0 676.4" fill="none" stroke="#1a1a1a" stroke-width="1.0"/><path d="M1267.0 682.8 L1289.4 682.8" fill="none" stroke="#1a1a1a" stroke-width="0.9"/><path d="M1267.0 696.7 L1520.0 696.7" fill="none" stroke="#1a1a1a" stroke-width="1.0"/><path d="M1309.0 676.4 L1309.0 696.7" fill="none" stroke="#1a1a1a" stroke-width="0.9"/><path d="M1370.8 676.4 L1370.8 696.7" fill="none" stroke="#1a1a1a" stroke-width="0.9"/><path d="M1499.7 676.4 L1499.7 696.7" fill="none" stroke="#1a1a1a" stroke-width="0.9"/><text x="1293" y="682.2" font-size="4.5" text-anchor="start" fill="#222" font-family="Liberation Sans" >SIZE</text><text x="1296" y="692.9" font-size="8" text-anchor="start" fill="#222" font-family="Liberation Sans" >B</text><text x="1322" y="681.9" font-size="4.5" text-anchor="start" fill="#222" font-family="Liberation Sans" letter-spacing="0.6">CAGE CODE</text><text x="1374" y="682.6" font-size="4.5" text-anchor="start" fill="#222" font-family="Liberation Sans" letter-spacing="0.6">DWG NO</text><text x="1503" y="682.6" font-size="4.5" text-anchor="start" fill="#222" font-family="Liberation Sans" >REV</text><path d="M1343.3 696.7 L1343.3 710.0" fill="none" stroke="#1a1a1a" stroke-width="0.9"/><path d="M1425.3 696.7 L1425.3 710.0" fill="none" stroke="#1a1a1a" stroke-width="0.9"/><text x="1293" y="705.6" font-size="4.5" text-anchor="start" fill="#222" font-family="Liberation Sans" >SCALE</text><text x="1321" y="706.9" font-size="8" text-anchor="start" fill="#222" font-family="Liberation Sans" >1:1</text><text x="1453" y="705.6" font-size="4.5" text-anchor="start" fill="#222" font-family="Liberation Sans" >SHEET 1  OF  1</text></svg>
<div class="a" style="left:8px;top:376px;width:472px;height:6px;background:#585858;"></div>
<div class="a" style="left:8px;top:376px;width:5px;height:47px;background:#585858;"></div>
<div class="a" style="left:8px;top:423px;width:5px;height:745px;background:#e9e9e9;"></div>
<div class="a" style="left:1267px;top:760px;width:5px;height:408px;background:#dadada;"></div>
<div class="a" style="left:13px;top:382px;width:1254px;height:41px;background:#2b579a;"></div>
<div class="a" style="left:13px;top:423px;width:1254px;height:64px;background:#fdfdfd;"></div>
<div class="a" style="left:13px;top:487px;width:1254px;height:15px;background:#e6e6e6;"></div>
<div class="a" style="left:13px;top:502px;width:1254px;height:647px;background:#e6e6e6;"></div>
<svg class="a" style="left:13px;top:384px" width="280" height="16" viewBox="0 0 280 16">
<rect x="1.5" y="2.5" width="10" height="10" fill="#fff"/><path d="M2 4.5 L11 10 L6.5 12 L2 9Z" fill="#111"/>
<path d="M19 4h7l2 2v6h-9z" fill="#fff"/>
<rect x="35" y="4" width="9" height="8" fill="#fff"/><path d="M36 5l7 6M43 5l-7 6" stroke="#d01818" stroke-width="2"/>
<path d="M49.5 5h4l1 1h5v6h-10z" fill="#e9c43a"/><path d="M49.5 12l2-4h9l-2 4z" fill="#f5d650"/>
<rect x="67" y="3" width="8" height="10" rx="1" fill="#222a44"/><rect x="68" y="4" width="6" height="4" fill="#fff"/><rect x="69" y="10" width="4" height="2" fill="#ddd"/>
<rect x="82" y="3" width="8" height="10" rx="1" fill="#333"/><rect x="83" y="4" width="6" height="4" fill="#fff"/><rect x="86" y="7" width="4" height="5" fill="#e7c14a"/>
<circle cx="100" cy="6.5" r="3.5" fill="#bcd3f0" stroke="#fff" stroke-width="1"/><path d="M102.5 9l3 3" stroke="#c02020" stroke-width="1.8"/>
<path d="M114 12l2-6h6l3 6z" fill="#f0c93a"/><rect x="115" y="7" width="4" height="3" fill="#e0a020"/>
<path d="M131 6h6a3 3 0 0 1 0 6h-3" fill="none" stroke="#fff" stroke-width="1.6"/><path d="M129 6l3-3v6z" fill="#fff"/>
<path d="M152 6h-6a3 3 0 0 0 0 6h3" fill="none" stroke="#7f9ccb" stroke-width="1.6"/><path d="M154 6l-3-3v6z" fill="#7f9ccb"/>
<circle cx="165" cy="7.5" r="4.5" fill="#6d8cc0"/>
<rect x="174" y="0" width="15" height="15" fill="#3a66a8"/><g fill="#cfe0f5"><circle cx="179" cy="4" r="1"/><circle cx="183" cy="4" r="1"/><circle cx="181" cy="8" r="1"/><circle cx="178" cy="11" r="1"/><circle cx="181" cy="11" r="1"/><circle cx="184" cy="11" r="1"/></g><circle cx="176" cy="3" r="1" fill="#f0c040"/>
<g fill="#7f9ccb"><circle cx="194" cy="11" r="0.9"/><circle cx="197" cy="8" r="0.9"/><circle cx="199" cy="11" r="0.9"/><circle cx="200" cy="4" r="1.2"/></g>
<rect x="207" y="3" width="7" height="10" fill="#f4f4f4"/><rect x="208" y="6" width="5" height="1" fill="#889"/><rect x="208" y="9" width="5" height="1" fill="#889"/>
<rect x="220" y="0" width="16" height="15" fill="#3a66a8"/><rect x="222" y="3" width="11" height="8" fill="#f4f4f4"/><path d="M223 10l4-5 5 5" fill="#d82020"/>
<rect x="240" y="4" width="8" height="7" fill="#e9cf6a"/><rect x="242" y="6" width="8" height="7" fill="#f0d87a"/>
<rect x="254" y="4" width="10" height="9" fill="#f0f0f0"/><rect x="254" y="6.5" width="10" height="1" fill="#889"/><rect x="254" y="9.5" width="10" height="1" fill="#889"/>
<rect x="269" y="4" width="5" height="1" fill="#dde"/><path d="M269 7h5l-2.5 3z" fill="#dde"/>
</svg>
<div class="t" style="left:22.7px;top:409.8px;font-size:8.74px;line-height:10px;color:#fff;transform:scaleX(0.8929);transform-origin:0 50%;">Menu</div>
<div class="a" style="left:54px;top:406px;width:40px;height:17px;background:#fdfdfd;"></div>
<div class="t" style="left:63.6px;top:410.0px;font-size:8.85px;line-height:10px;color:#2b579a;transform:scaleX(0.8929);transform-origin:0 50%;">Home</div>
<div class="t" style="left:103.4px;top:409.8px;font-size:8.74px;line-height:10px;color:#fff;transform:scaleX(0.8929);transform-origin:0 50%;">Visualization</div>
<div class="t" style="left:165.7px;top:409.8px;font-size:8.74px;line-height:10px;color:#fff;transform:scaleX(0.8929);transform-origin:0 50%;">View</div>
<div class="t" style="left:201.4px;top:409.8px;font-size:9.18px;line-height:10px;color:#fff;transform:scaleX(0.8929);transform-origin:0 50%;">Communication</div>
<div class="t" style="left:279px;top:409.8px;font-size:8.68px;line-height:10px;color:#fff;transform:scaleX(0.8929);transform-origin:0 50%;">Smart eMarkup</div>
<svg class="a" style="left:355px;top:409px" width="9" height="11"><path d="M4.5 1a3.2 3.2 0 0 1 2 5.6v1.6h-4v-1.6a3.2 3.2 0 0 1 2-5.6z" fill="none" stroke="#dfe6f3" stroke-width="0.9"/><rect x="3" y="9" width="3" height="1" fill="#dfe6f3"/></svg>
<div class="t" style="left:372px;top:409.8px;font-size:8.51px;line-height:10px;color:#c9d6ec;transform:scaleX(0.8929);transform-origin:0 50%;">Search Commands...</div>
<div class="t" style="left:1175.5px;top:410.0px;font-size:8.51px;line-height:10px;color:#fff;transform:scaleX(0.8929);transform-origin:0 50%;">Styles</div>
<svg class="a" style="left:1198px;top:385px" width="69" height="37" viewBox="0 0 69 37">
<rect x="6" y="10" width="6" height="1.6" fill="#fff"/>
<rect x="31" y="7" width="5" height="5" fill="none" stroke="#fff" stroke-width="1"/><path d="M33 6.5h4v4" fill="none" stroke="#fff"/>
<path d="M54 5l5.5 5.5M59.5 5l-5.5 5.5" stroke="#fff" stroke-width="1.2"/>
<path d="M2 28l2.5 2.5 2.5-2.5" fill="none" stroke="#fff" stroke-width="0.9"/>
<circle cx="15" cy="29" r="5" fill="#fff"/><text x="15" y="32" font-size="7.5" text-anchor="middle" fill="#d33" font-family="Liberation Sans" font-weight="bold">?</text>
<path d="M24.5 28l2.5 2.5 2.5-2.5" fill="none" stroke="#fff" stroke-width="0.9"/>
<rect x="33.5" y="31" width="6" height="1.5" fill="#fff"/>
<rect x="46" y="27" width="5" height="5" fill="none" stroke="#fff" stroke-width="1"/><path d="M48 26.5h4v4" fill="none" stroke="#fff"/>
<path d="M59 26l5 5M64 26l-5 5" stroke="#fff" stroke-width="1.2"/>
</svg>
<svg class="a" style="left:22px;top:427px" width="270" height="42" viewBox="0 0 270 42">
<path d="M4 6h7l2 2h8v5H4z" fill="#e7bd2c" stroke="#8a6a10" stroke-width="0.6"/>
<path d="M3 19l4-8h16l-4 8z" fill="#f5d24a" stroke="#8a6a10" stroke-width="0.6"/>
<path d="M42 6l8-4 12 8v11l-8 0-12-8z" fill="#f2d33a" stroke="#7a6410" stroke-width="0.7"/><path d="M48 5l6-2 6 4-6 3z" fill="#7fb4e8" stroke="#335" stroke-width="0.5"/><rect x="53" y="12" width="9" height="9" fill="#e9c530" stroke="#7a6410" stroke-width="0.7"/>
<g fill="#f4f4f4" stroke="#c8c8c8" stroke-width="0.7"><rect x="86" y="2" width="9" height="9"/><rect x="86" y="12" width="9" height="9"/><rect x="96" y="12" width="9" height="9"/></g>
<rect x="121" y="2" width="8" height="8" fill="#eef4fb" stroke="#7a8fb0" stroke-width="0.7"/><path d="M127 8l3 3" stroke="#d02020" stroke-width="1.5"/>
<rect x="121" y="16" width="9" height="9" fill="#fff" stroke="#8aa0c0" stroke-width="0.7"/><path d="M123 22h7l-2-2" fill="none" stroke="#2266cc" stroke-width="1"/>
<path d="M121 33l3-4h5l3 4-3 4h-5z" fill="#f0c830" stroke="#776" stroke-width="0.5"/><circle cx="125" cy="37" r="2" fill="#335"/>
<rect x="208" y="3" width="10" height="8" fill="#fff" stroke="#557" stroke-width="0.7"/><path d="M209 10l3-4 3 4z" fill="#2a8a4a"/><path d="M216 6h3l-1.5-2z" fill="#2266cc"/>
</svg>
<div class="t" style="left:22.9px;top:451.1px;font-size:8.40px;line-height:10px;color:#333;transform:scaleX(0.8929);transform-origin:0 50%;">Open...</div>
<div class="t" style="left:57.6px;top:451.0px;font-size:8.51px;line-height:10px;color:#333;transform:scaleX(0.8929);transform-origin:0 50%;">Assemble</div>
<div class="t" style="left:96.8px;top:451.1px;font-size:8.40px;line-height:10px;color:#b0b0b0;transform:scaleX(0.8929);transform-origin:0 50%;">Disassemble</div>
<div class="t" style="left:154.7px;top:429.0px;font-size:8.90px;line-height:10px;color:#333;transform:scaleX(0.8929);transform-origin:0 50%;">Import Geometry</div>
<div class="t" style="left:154.7px;top:443.3px;font-size:8.51px;line-height:10px;color:#333;transform:scaleX(0.8929);transform-origin:0 50%;">Import Reference 2D</div>
<div class="t" style="left:154.7px;top:457.8px;font-size:8.51px;line-height:10px;color:#333;transform:scaleX(0.8929);transform-origin:0 50%;">Export Part</div>
<div class="t" style="left:242px;top:429.0px;font-size:8.51px;line-height:10px;color:#333;transform:scaleX(0.8929);transform-origin:0 50%;">Export Image</div>
<div class="t" style="left:143.3px;top:474.4px;font-size:8.51px;line-height:10px;color:#666;transform:scaleX(0.8929);transform-origin:0 50%;">Create</div>
<div class="a" style="left:293px;top:427px;width:1px;height:58px;background:#e2e2e2;"></div>
<svg class="a" style="left:300px;top:427px" width="62" height="42" viewBox="0 0 62 42">
<rect x="3" y="4" width="14" height="17" fill="#f2f2f2" stroke="#c6c6c6" stroke-width="0.8"/><rect x="7" y="2" width="6" height="4" fill="#e0e0e0" stroke="#c6c6c6" stroke-width="0.6"/><rect x="9" y="9" width="9" height="12" fill="#fafafa" stroke="#ccc" stroke-width="0.6"/>
<path d="M30 3l7 7M37 3l-7 7" stroke="#cfcfcf" stroke-width="1.2"/>
<rect x="30" y="16" width="6" height="7" fill="#fafafa" stroke="#d0d0d0" stroke-width="0.6"/><rect x="33" y="18" width="6" height="7" fill="#fafafa" stroke="#d0d0d0" stroke-width="0.6"/>
<path d="M30 39l6-7" stroke="#e8a020" stroke-width="2.5"/><path d="M29 40l2-3" stroke="#e05020" stroke-width="2"/>
</svg>
<div class="t" style="left:303px;top:451.0px;font-size:8.51px;line-height:10px;color:#b0b0b0;transform:scaleX(0.8929);transform-origin:0 50%;">Paste</div>
<div class="t" style="left:340px;top:429.0px;font-size:8.51px;line-height:10px;color:#b0b0b0;transform:scaleX(0.8929);transform-origin:0 50%;">Cut</div>
<div class="t" style="left:340px;top:443.3px;font-size:8.51px;line-height:10px;color:#b0b0b0;transform:scaleX(0.8929);transform-origin:0 50%;">Copy</div>
<div class="t" style="left:340px;top:457.8px;font-size:8.51px;line-height:10px;color:#333;transform:scaleX(0.8929);transform-origin:0 50%;">Clear</div>
<div class="t" style="left:323px;top:474.4px;font-size:8.51px;line-height:10px;color:#666;transform:scaleX(0.8929);transform-origin:0 50%;">Edit</div>
<div class="a" style="left:364px;top:427px;width:1px;height:58px;background:#e2e2e2;"></div>
<svg class="a" style="left:370px;top:427px" width="330" height="42" viewBox="0 0 330 42">
<g fill="#ececec" stroke="#cdcdcd" stroke-width="0.7"><rect x="7" y="6" width="8" height="16" rx="4"/><rect x="18" y="6" width="8" height="16" rx="4"/></g><path d="M15 14h3" stroke="#bbb"/>
<g fill="#f4f4f4" stroke="#cdcdcd" stroke-width="0.7"><path d="M38 4h8l2 2v8h-10z"/><path d="M45 12h8l2 2v8h-10z"/></g><path d="M50 3l3 3" stroke="#ccc"/>
<circle cx="82" cy="6" r="5" fill="#eaeaea"/><circle cx="74" cy="15" r="6" fill="#e0e0e0"/><path d="M84 12a4 4 0 0 1-3 6" fill="none" stroke="#ccc"/>
<text x="130" y="19" font-size="17" text-anchor="middle" fill="#111" font-family="Liberation Serif">&#931;=</text>
<path d="M163 3h6v8h-6z" fill="#f0f0f0" stroke="#d5d5d5" stroke-width="0.7"/>
<path d="M163 20l3-3 3 3v3h-6z" fill="#eee" stroke="#d5d5d5" stroke-width="0.6"/>
<path d="M163 30h3v10h-3zM167 32h3v8h-3z" fill="#e8e8e8" stroke="#d0d0d0" stroke-width="0.6"/>
<rect x="253" y="3" width="14" height="9" fill="#fff" stroke="#555" stroke-width="0.8"/><rect x="253" y="3" width="14" height="2" fill="#8ab"/><circle cx="266" cy="11" r="2.5" fill="#2a9a4a"/>
</svg>
<div class="t" style="left:378.7px;top:450.8px;font-size:8.51px;line-height:10px;color:#b0b0b0;transform:scaleX(0.8929);transform-origin:0 50%;">Hide</div>
<div class="t" style="left:373px;top:460.4px;font-size:8.51px;line-height:10px;color:#b0b0b0;transform:scaleX(0.8929);transform-origin:0 50%;">Selected</div>
<div class="t" style="left:406.6px;top:450.9px;font-size:8.18px;line-height:10px;color:#b0b0b0;transform:scaleX(0.8929);transform-origin:0 50%;">Suppress</div>
<div class="t" style="left:448px;top:450.8px;font-size:8.51px;line-height:10px;color:#b0b0b0;transform:scaleX(0.8929);transform-origin:0 50%;">Ghost</div>
<div class="t" style="left:440px;top:460.4px;font-size:8.51px;line-height:10px;color:#b0b0b0;transform:scaleX(0.8929);transform-origin:0 50%;">Selected</div>
<svg class="a" style="left:419px;top:463px" width="30" height="4"><path d="M0.5 0.5l2 2 2-2" fill="none" stroke="#bbb" stroke-width="0.8"/><path d="M25.5 0.5l2 2 2-2" fill="none" stroke="#bbb" stroke-width="0.8"/></svg>
<div class="t" style="left:477px;top:450.8px;font-size:8.68px;line-height:10px;color:#333;transform:scaleX(0.8929);transform-origin:0 50%;">Query Custom</div>
<div class="t" style="left:488px;top:460.4px;font-size:8.51px;line-height:10px;color:#333;transform:scaleX(0.8929);transform-origin:0 50%;">Property</div>
<div class="t" style="left:542.4px;top:429.1px;font-size:8.40px;line-height:10px;color:#b0b0b0;transform:scaleX(0.8929);transform-origin:0 50%;">Find in Scene Browser</div>
<div class="t" style="left:542.4px;top:443.3px;font-size:8.51px;line-height:10px;color:#b0b0b0;transform:scaleX(0.8929);transform-origin:0 50%;">Group</div>
<div class="t" style="left:542.4px;top:457.8px;font-size:8.85px;line-height:10px;color:#b0b0b0;transform:scaleX(0.8929);transform-origin:0 50%;">Move Anchor</div>
<div class="t" style="left:635px;top:429.1px;font-size:8.34px;line-height:10px;color:#333;transform:scaleX(0.8929);transform-origin:0 50%;">Recreate Display</div>
<div class="t" style="left:511.8px;top:474.4px;font-size:8.51px;line-height:10px;color:#666;transform:scaleX(0.8929);transform-origin:0 50%;">Operations</div>
<div class="a" style="left:697px;top:427px;width:1px;height:58px;background:#e2e2e2;"></div>
<svg class="a" style="left:707px;top:427px" width="26" height="24"><circle cx="12" cy="12" r="10" fill="#e4e4e4" stroke="#d0d0d0" stroke-width="0.8"/><circle cx="9" cy="9" r="4" fill="#f2f2f2"/></svg>
<div class="t" style="left:709px;top:451.0px;font-size:8.51px;line-height:10px;color:#b0b0b0;transform:scaleX(0.8929);transform-origin:0 50%;">TriBall</div>
<div class="t" style="left:701px;top:474.4px;font-size:8.51px;line-height:10px;color:#666;transform:scaleX(0.8929);transform-origin:0 50%;">Positioning</div>
<div class="a" style="left:744px;top:427px;width:1px;height:58px;background:#e2e2e2;"></div>
<svg class="a" style="left:755px;top:427px" width="140" height="42" viewBox="0 0 140 42">
<path d="M4 3l19 17" stroke="#222" stroke-width="1.3"/><path d="M2 6l5-5M20 22l5-5" stroke="#222" stroke-width="1"/>
<rect x="37" y="2" width="10" height="7" fill="#fff" stroke="#d03030" stroke-width="0.8"/><rect x="40" y="5" width="4" height="3" fill="#2a6ac8"/>
<circle cx="42" cy="20" r="4" fill="none" stroke="#555" stroke-width="0.8"/><path d="M40 17l2 3" stroke="#555" stroke-width="0.8"/>
<path d="M36 38l5-6 5 6z" fill="none" stroke="#555" stroke-width="0.8"/>
<path d="M102 22l6-14" stroke="#bbb" stroke-width="0.8"/><text x="112" y="14" font-size="11" fill="#bbb" font-family="Liberation Sans">A</text>
</svg>
<div class="t" style="left:758px;top:451.0px;font-size:8.51px;line-height:10px;color:#333;transform:scaleX(0.8929);transform-origin:0 50%;">Smart</div>
<div class="t" style="left:750px;top:460.4px;font-size:8.51px;line-height:10px;color:#333;transform:scaleX(0.8929);transform-origin:0 50%;">Dimension</div>
<div class="t" style="left:802.7px;top:429.0px;font-size:8.51px;line-height:10px;color:#333;transform:scaleX(0.8929);transform-origin:0 50%;">Horizontal</div>
<div class="t" style="left:802.7px;top:443.3px;font-size:8.51px;line-height:10px;color:#333;transform:scaleX(0.8929);transform-origin:0 50%;">Radial</div>
<div class="t" style="left:802.7px;top:457.8px;font-size:8.51px;line-height:10px;color:#333;transform:scaleX(0.8929);transform-origin:0 50%;">Angular</div>
<svg class="a" style="left:840px;top:432px" width="6" height="18"><path d="M0.5 0.5l2.2 2.2 2.2-2.2" fill="none" stroke="#444" stroke-width="0.9"/><path d="M-12 14.5l2.2 2.2 2.2-2.2" fill="none" stroke="#444" stroke-width="0.9"/></svg>
<svg class="a" style="left:826px;top:446px" width="6" height="4"><path d="M0.5 0.5l2.2 2.2 2.2-2.2" fill="none" stroke="#444" stroke-width="0.9"/></svg>
<div class="t" style="left:862px;top:451.0px;font-size:8.51px;line-height:10px;color:#b0b0b0;transform:scaleX(0.8929);transform-origin:0 50%;">Text</div>
<div class="t" style="left:848.6px;top:460.4px;font-size:8.51px;line-height:10px;color:#b0b0b0;transform:scaleX(0.8929);transform-origin:0 50%;">Annotations</div>
<div class="t" style="left:801px;top:474.4px;font-size:8.51px;line-height:10px;color:#666;transform:scaleX(0.8929);transform-origin:0 50%;">Dimension</div>
<div class="a" style="left:896px;top:427px;width:1px;height:58px;background:#e2e2e2;"></div>
<svg class="a" style="left:900px;top:427px" width="26" height="22"><text x="3" y="19" font-size="21" font-style="italic" fill="#111" font-family="Liberation Serif">A</text></svg>
<div class="t" style="left:906px;top:451.0px;font-size:8.51px;line-height:10px;color:#333;transform:scaleX(0.8929);transform-origin:0 50%;">Text</div>
<div class="a" style="left:930px;top:432px;width:115px;height:14px;background:#e9e9e9;border:1px solid #d2d2d2;box-sizing:border-box"></div>
<div class="a" style="left:1045px;top:432px;width:79px;height:14px;background:#ececec;border:1px solid #d2d2d2;box-sizing:border-box"></div>
<div class="t" style="left:933px;top:434.7px;font-size:8.29px;line-height:10px;color:#bbb;transform:scaleX(0.8929);transform-origin:0 50%;">Arial</div>
<svg class="a" style="left:930px;top:450px" width="190" height="16" viewBox="0 0 190 16"><g fill="#bbb" font-family="Liberation Serif" font-size="10"><text x="4" y="12" font-weight="bold">B</text><text x="20" y="12" font-style="italic">I</text><text x="34" y="12" text-decoration="underline">U</text></g><g stroke="#c8c8c8" stroke-width="1"><path d="M50 4h8M50 7h6M50 10h8M50 13h6"/><path d="M66 4h8M67 7h6M66 10h8M67 13h6"/><path d="M82 4h8M82 7h8M82 10h8M82 13h8"/></g><text x="97" y="12" font-size="9" fill="#bbb" font-family="Liberation Sans">A</text><text x="112" y="12" font-size="7" fill="#bbb" font-family="Liberation Sans">A</text></svg>
<div class="a" style="left:1057px;top:451px;width:60px;height:14px;background:#ececec;border:1px solid #d2d2d2;box-sizing:border-box"></div>
<div class="t" style="left:1005px;top:474.4px;font-size:8.51px;line-height:10px;color:#666;transform:scaleX(0.8929);transform-origin:0 50%;">Text</div>
<div class="a" style="left:1128px;top:427px;width:1px;height:58px;background:#e2e2e2;"></div>
<svg class="a" style="left:13px;top:487px" width="110" height="16" viewBox="0 0 110 16">
<path d="M1 15L12 2H100V15z" fill="#fff" stroke="#d6d6d6" stroke-width="0.8"/>
<path d="M92.5 6l4 4M96.5 6l-4 4" stroke="#555" stroke-width="0.9"/></svg>
<div class="t" style="left:36px;top:490.8px;font-size:8.40px;line-height:10px;color:#222;transform:scaleX(0.8929);transform-origin:0 50%;font-weight:bold;letter-spacing:-0.35px">Axle (Read Only)</div>
<svg class="a" style="left:1119px;top:493px" width="8" height="5"><path d="M0 0h7l-3.5 4z" fill="#555"/></svg>
<div class="a" style="left:13px;top:1149px;width:1254px;height:17px;background:#fafafa;"></div>
<div class="a" style="left:13px;top:1166px;width:1254px;height:2px;background:#dcdcdc;"></div>
<svg class="a" style="left:161px;top:502px" width="968" height="647" viewBox="161 502 968 647"><defs>
<linearGradient id="bgv" x1="0" y1="0" x2="0" y2="1">
 <stop offset="0" stop-color="#c2c2c2"/><stop offset="0.23" stop-color="#cfcfcf"/><stop offset="0.43" stop-color="#d9d9d9"/><stop offset="0.52" stop-color="#e6e6e6"/><stop offset="0.64" stop-color="#efefef"/><stop offset="0.85" stop-color="#f6f6f6"/><stop offset="1" stop-color="#f8f8f8"/>
</linearGradient>
<linearGradient id="bgh" x1="0" y1="0" x2="1" y2="0">
 <stop offset="0" stop-color="#c0c0c0" stop-opacity="0.45"/><stop offset="0.1" stop-color="#cfcfcf" stop-opacity="0"/><stop offset="0.9" stop-color="#d0d0d0" stop-opacity="0"/><stop offset="1" stop-color="#c8c8c8" stop-opacity="0.3"/>
</linearGradient>
<radialGradient id="glow" cx="0.5" cy="0.5" r="0.5">
 <stop offset="0" stop-color="#fff" stop-opacity="1"/><stop offset="0.6" stop-color="#fff" stop-opacity="0.7"/><stop offset="1" stop-color="#fff" stop-opacity="0"/>
</radialGradient>
<filter id="b4" filterUnits="userSpaceOnUse" x="100" y="450" width="1100" height="750"><feGaussianBlur stdDeviation="4"/></filter>
<filter id="b10" filterUnits="userSpaceOnUse" x="100" y="450" width="1100" height="750"><feGaussianBlur stdDeviation="10"/></filter>
<filter id="b18" filterUnits="userSpaceOnUse" x="100" y="450" width="1100" height="750"><feGaussianBlur stdDeviation="18"/></filter>
<filter id="b30" filterUnits="userSpaceOnUse" x="100" y="450" width="1100" height="750"><feGaussianBlur stdDeviation="30"/></filter>
<linearGradient id="brownL" x1="0" y1="0" x2="1" y2="0.3">
 <stop offset="0" stop-color="#6a4236"/><stop offset="0.35" stop-color="#8d5e4d"/><stop offset="0.6" stop-color="#a57565"/><stop offset="0.85" stop-color="#8a5a4a"/><stop offset="1" stop-color="#744a3c"/>
</linearGradient>
<linearGradient id="brownR" x1="0" y1="0" x2="1" y2="0.2">
 <stop offset="0" stop-color="#6e4538"/><stop offset="0.3" stop-color="#8e5e4c"/><stop offset="0.55" stop-color="#b48676"/><stop offset="0.8" stop-color="#8b5b4a"/><stop offset="1" stop-color="#6f4638"/>
</linearGradient>
<linearGradient id="pink" x1="0" y1="0" x2="1" y2="1">
 <stop offset="0" stop-color="#eab0a4"/><stop offset="1" stop-color="#d9958a"/>
</linearGradient>
<linearGradient id="steel" x1="0" y1="0" x2="0" y2="1">
 <stop offset="0" stop-color="#b9cad9"/><stop offset="0.5" stop-color="#a1b6c9"/><stop offset="1" stop-color="#8aa2b7"/>
</linearGradient>
<radialGradient id="cone" cx="0.4" cy="0.55" r="0.6">
 <stop offset="0" stop-color="#e6eef5"/><stop offset="0.35" stop-color="#b8cad9"/><stop offset="1" stop-color="#93abc0"/>
</radialGradient>
<linearGradient id="cream" x1="0" y1="0" x2="1" y2="0">
 <stop offset="0" stop-color="#cfc7a6"/><stop offset="0.3" stop-color="#ece6cf"/><stop offset="0.55" stop-color="#d8d0b2"/><stop offset="0.8" stop-color="#f3efe0"/><stop offset="1" stop-color="#cdc6a8"/>
</linearGradient>
<linearGradient id="hubw" x1="0" y1="0" x2="1" y2="1">
 <stop offset="0" stop-color="#fbfaf5"/><stop offset="0.5" stop-color="#f1efe6"/><stop offset="1" stop-color="#e2ddca"/>
</linearGradient>
</defs><rect x="161" y="502" width="968" height="647" fill="url(#bgv)"/><rect x="161" y="502" width="968" height="647" fill="url(#bgh)"/><path d="M240 660 L330 615 L520 565 L700 580 L760 650 L880 765 L1000 840 L1040 950 L1000 990 L860 930 L500 880 L290 820z" fill="#fff" opacity="0.95" filter="url(#b30)"/><ellipse cx="640" cy="690" rx="200" ry="110" fill="#fff" opacity="0.7" filter="url(#b30)"/><ellipse cx="1000" cy="860" rx="75" ry="90" fill="#fff" opacity="0.85" filter="url(#b18)"/><ellipse cx="500" cy="1060" rx="420" ry="120" fill="#fafafa" opacity="0.8" filter="url(#b30)"/><path d="M320 810 L480 850 L760 885 L880 935 L920 1000 L780 995 L560 950 L420 915 L330 860z" fill="#9a9a9a" opacity="0.6" filter="url(#b30)"/><path d="M330 830 L470 865 L540 920 L430 915 L350 880z" fill="#8c8c8c" opacity="0.45" filter="url(#b18)"/><path d="M320 820 Q380 860 470 880 L500 960 Q420 950 350 900z" fill="#8a8a8a" opacity="0.55" filter="url(#b10)"/><ellipse cx="400" cy="880" rx="70" ry="60" fill="none" stroke="#8a8a8a" stroke-width="14" opacity="0.3" filter="url(#b10)"/><path d="M500 875 Q560 885 640 895 Q760 895 860 925 L890 955 Q800 965 700 950 Q600 945 530 930 Q500 910 500 875z" fill="#2a2a2a" opacity="0.88" filter="url(#b18)"/><path d="M510 885 Q640 905 760 900 L850 930 Q760 945 650 928z" fill="#1a1a1a" opacity="0.7" filter="url(#b10)"/><ellipse cx="960" cy="1030" rx="90" ry="70" fill="#8a8a8a" opacity="0.45" filter="url(#b18)"/><path d="M880 990 Q878 1040 905 1075" fill="none" stroke="#5a5a5a" stroke-width="14" opacity="0.45" filter="url(#b10)"/><ellipse cx="1015" cy="978" rx="50" ry="22" fill="#444" opacity="0.55" filter="url(#b10)"/><ellipse cx="1105" cy="880" rx="35" ry="90" fill="#b4b4b4" opacity="0.55" filter="url(#b18)"/><ellipse cx="660" cy="990" rx="120" ry="50" fill="#b0b0b0" opacity="0.35" filter="url(#b18)"/><path d="M306 642 L335 637 L359 640 L359 676 L330 700 L300 705 L298 760 L293 780 L318 790 L344 806 L344 812 L320 810 L293 800 L280 770 L267 755 L265 705 L285 690 L300 676z" fill="#ecebe6"/><path d="M267 705 L299 703 L299 756 L267 755z" fill="#fafaf8"/><path d="M306 642 L335 637 L359 640 L340 655 L312 660z" fill="#c9c7bd"/><path d="M285 690 L300 676 L330 676 L330 700 L300 705z" fill="#dedcd2"/><circle cx="268" cy="721" r="2.5" fill="#444"/><path d="M336 654 Q358 643 382 646 Q400 650 412 656 L457 695 Q462 760 434 795 Q415 818 398 820 Q360 822 329 805 Q310 790 301 767 Q296 735 299 710 Q305 680 336 654z" fill="url(#brownL)"/><path d="M312 700 Q318 672 340 655" fill="none" stroke="#b89080" stroke-width="2.5" opacity="0.5"/><ellipse cx="409" cy="738" rx="49" ry="81" transform="rotate(8 409 738)" fill="url(#pink)"/><ellipse cx="409" cy="738" rx="49" ry="81" transform="rotate(8 409 738)" fill="none" stroke="#8a5a4a" stroke-width="1.2"/><ellipse cx="407" cy="738" rx="44" ry="76" transform="rotate(8 407 738)" fill="none" stroke="#c98a7c" stroke-width="0.8"/><path d="M389 771 L416 768 L418 808 L392 810z" fill="#ece4de"/><ellipse cx="399" cy="787" rx="8" ry="11" fill="#6e4436"/><ellipse cx="411" cy="736" rx="27" ry="42" fill="#a3b7ca"/><ellipse cx="411" cy="736" rx="27" ry="42" fill="none" stroke="#8aa0b4" stroke-width="1"/><circle cx="385" cy="712" r="1.8" fill="#fff"/><circle cx="383" cy="760" r="1.8" fill="#fff"/><circle cx="402" cy="771" r="1.8" fill="#fff"/><path d="M404 712 L455 712 L459 698 L486 696 L498 724 L504 735 L530 736 L540 730 L566 712 L578 704 L655 707 L661 745 L709 778 L756 796 L759 793 L786 778 L798 808 L836 822 L857 828 L875 834 L870 905 L845 923 L821 905 L756 882 L697 867 L661 876 L626 888 L584 882 L557 864 L534 870 L498 885 L459 867 L453 840 L430 811 L406 805 L396 770z" fill="url(#steel)"/><path d="M406 750 L470 742 L498 735 L540 730 L545 800 L500 820 L430 812z" fill="#9fb4c8"/><path d="M459 698 L486 696 L498 724 L498 760 L459 755z" fill="#b3c6d6"/><path d="M412 760 L460 752 L462 800 L420 806z" fill="#93aabe"/><ellipse cx="608" cy="808" rx="72" ry="82" fill="#8ea6bb"/><path d="M540 790 A72 82 0 0 1 660 740" fill="none" stroke="#c5d4e1" stroke-width="3"/><path d="M672 790 A72 82 0 0 1 640 880" fill="none" stroke="#7a92a8" stroke-width="6"/><ellipse cx="604" cy="815" rx="58" ry="70" fill="url(#cone)"/><path d="M560 850 L640 830 L600 880z" fill="#eef4f8" opacity="0.5" filter="url(#b4)"/><path d="M661 800 L709 800 L756 820 L786 800 L836 822 L875 834 L870 905 L756 882 L697 867 L661 876z" fill="#9db3c7"/><path d="M709 778 L756 796 L759 793 L786 778 L798 808 L836 822 L857 828 L875 834 L875 850 L790 830 L720 810 L680 800z" fill="#b9cbda"/><path d="M759 793 L786 778 L798 808 L798 845 L764 840z" fill="#adc1d2"/><path d="M822 850 L872 858 L870 905 L845 923 L821 905z" fill="#8fa7bc"/><path d="M760 882 L790 890 L792 915 L782 925 L768 920 L760 905z" fill="#96adc1" stroke="#7d95aa" stroke-width="0.8"/><circle cx="775" cy="918" r="5" fill="#9fb4c7" stroke="#7d95aa" stroke-width="0.8"/><path d="M820 882 L850 890 L852 915 L842 925 L828 920 L820 905z" fill="#96adc1" stroke="#7d95aa" stroke-width="0.8"/><circle cx="835" cy="918" r="5" fill="#9fb4c7" stroke="#7d95aa" stroke-width="0.8"/><path d="M489 793 L554 800 L557 864 L534 870 L498 885z" fill="#a6bacd"/><ellipse cx="480" cy="852" rx="27" ry="33" fill="#a5b9cc" stroke="#8098ad" stroke-width="1"/><ellipse cx="482" cy="852" rx="10" ry="12" fill="#bfa890"/><rect x="497.5" y="849.5" width="5" height="5" fill="#b8a088"/><rect x="487.5" y="871.2" width="5" height="5" fill="#b8a088"/><rect x="467.5" y="871.2" width="5" height="5" fill="#b8a088"/><rect x="457.5" y="849.5" width="5" height="5" fill="#b8a088"/><rect x="467.5" y="827.8" width="5" height="5" fill="#b8a088"/><rect x="487.5" y="827.8" width="5" height="5" fill="#b8a088"/><circle cx="535.0" cy="795.4" r="2" fill="#b09a80"/><circle cx="546.0" cy="810.0" r="2" fill="#b09a80"/><circle cx="550.0" cy="830.0" r="2" fill="#b09a80"/><circle cx="546.0" cy="850.0" r="2" fill="#b09a80"/><circle cx="535.0" cy="864.6" r="2" fill="#b09a80"/><circle cx="520.0" cy="870.0" r="2" fill="#b09a80"/><circle cx="505.0" cy="864.6" r="2" fill="#b09a80"/><circle cx="494.0" cy="850.0" r="2" fill="#b09a80"/><path d="M409 652 L430 642 L448 645 L452 668 L457 690 L440 702 L425 702 L418 680 L400 676z" fill="#383838"/><path d="M410 652 L432 641 L447 646 L428 656z" fill="#5a5a5a"/><path d="M393 690 Q395 680 408 682 L410 725 L397 725 Q393 710 393 690z" fill="#484848"/><circle cx="397" cy="673" r="5" fill="#8a8a8a"/><circle cx="389" cy="666" r="2" fill="#999"/><circle cx="455" cy="671" r="2" fill="#999"/><path d="M532 690 L632 668 L650 700 L556 722z" fill="#eef1f4" opacity="0.85" stroke="#a8b0b8" stroke-width="0.8"/><path d="M568 700 L650 690 L664 712 L590 730z" fill="#95abc0"/><path d="M526 617 Q528 596 570 593 Q612 592 616 612 L640 690 Q600 712 540 702z" fill="#f2f2ee" opacity="0.9"/><path d="M528 634 Q570 650 614 632 L618 690 Q580 712 532 702z" fill="url(#cream)"/><ellipse cx="571" cy="617" rx="44" ry="23" fill="#f8f8f4" stroke="#d8d8d0" stroke-width="0.8"/><ellipse cx="572" cy="620" rx="28" ry="14" fill="#e2e0d6"/><path d="M556 610 L570 606 L581 612 L580 626 L566 630 L555 624z" fill="#666"/><circle cx="537" cy="680" r="5" fill="#8a8a8a"/><circle cx="539" cy="692" r="5" fill="#7a7a7a"/><circle cx="638" cy="645" r="5" fill="#888"/><circle cx="640" cy="656" r="4" fill="#888"/><path d="M715 606 L742 610 L767 690 L732 740 L700 730z" fill="#f0f1f2" opacity="0.75" stroke="#b8bcc0" stroke-width="0.8"/><path d="M643 652 Q646 628 680 626 Q712 626 716 645 L726 725 Q690 745 650 730z" fill="#f2f2ee" opacity="0.9"/><path d="M644 663 Q680 676 712 660 L722 722 Q690 742 652 730z" fill="url(#cream)"/><ellipse cx="680" cy="648" rx="37" ry="21" fill="#f8f8f4" stroke="#d8d8d0" stroke-width="0.8"/><ellipse cx="681" cy="650" rx="23" ry="12" fill="#e2e0d6"/><path d="M670 642 L682 639 L692 644 L691 657 L679 660 L669 655z" fill="#666"/><circle cx="752" cy="670" r="5" fill="#8a8a8a"/><circle cx="754" cy="684" r="5" fill="#8a8a8a"/><circle cx="722" cy="728" r="5" fill="#8a8a8a"/><path d="M668 716 L690 709 L714 716 L718 750 L706 772 L682 774 L670 752z" fill="#3c3c3c"/><path d="M672 716 L690 710 L712 716 L694 724z" fill="#585858"/><path d="M678 767 L709 767 L708 791 L680 791z" fill="#b9cbda"/><path d="M660 762 Q662 752 674 755 L676 796 L662 797z" fill="#484848"/><path d="M714 745 L736 748 L738 772 L722 775 L714 765z" fill="#23309a"/><path d="M459 640 Q500 625 540 605 Q575 588 592 581 Q603 578 605 596" fill="none" stroke="#1d5aa8" stroke-width="4.6" stroke-linecap="round"/><path d="M459 640 Q500 625 540 605 Q575 588 592 581 Q603 578 605 596" fill="none" stroke="#3a8ad8" stroke-width="3.4" stroke-linecap="round"/><path d="M459 640 Q500 625 540 605 Q575 588 592 581 Q603 578 605 596" fill="none" stroke="#8cc8f4" stroke-width="1" stroke-linecap="round" transform="translate(-0.6 -0.6)"/><path d="M426 618 Q470 640 505 645 Q525 650 534 657" fill="none" stroke="#a89a10" stroke-width="3.0" stroke-linecap="round"/><path d="M426 618 Q470 640 505 645 Q525 650 534 657" fill="none" stroke="#d8c820" stroke-width="2.2" stroke-linecap="round"/><path d="M426 618 Q470 640 505 645 Q525 650 534 657" fill="none" stroke="#f2ea88" stroke-width="0.8" stroke-linecap="round" transform="translate(-0.4 -0.5)"/><path d="M426 618 Q480 600 540 598 Q575 580 590 575 Q603 574 606 590" fill="none" stroke="#a89a10" stroke-width="3.0" stroke-linecap="round"/><path d="M426 618 Q480 600 540 598 Q575 580 590 575 Q603 574 606 590" fill="none" stroke="#d8c820" stroke-width="2.2" stroke-linecap="round"/><path d="M426 618 Q480 600 540 598 Q575 580 590 575 Q603 574 606 590" fill="none" stroke="#f2ea88" stroke-width="0.8" stroke-linecap="round" transform="translate(-0.4 -0.5)"/><path d="M350 766 Q380 752 401 744 Q430 737 453 714 Q467 686 480 645 Q495 610 540 596" fill="none" stroke="#a89a10" stroke-width="3.1" stroke-linecap="round"/><path d="M350 766 Q380 752 401 744 Q430 737 453 714 Q467 686 480 645 Q495 610 540 596" fill="none" stroke="#d8c820" stroke-width="2.3" stroke-linecap="round"/><path d="M350 766 Q380 752 401 744 Q430 737 453 714 Q467 686 480 645 Q495 610 540 596" fill="none" stroke="#f2ea88" stroke-width="0.8" stroke-linecap="round" transform="translate(-0.4 -0.5)"/><path d="M370 752 Q368 730 382 728 Q392 740 385 752 Q400 745 408 724" fill="none" stroke="#a89a10" stroke-width="2.8" stroke-linecap="round"/><path d="M370 752 Q368 730 382 728 Q392 740 385 752 Q400 745 408 724" fill="none" stroke="#d8c820" stroke-width="2.0" stroke-linecap="round"/><path d="M370 752 Q368 730 382 728 Q392 740 385 752 Q400 745 408 724" fill="none" stroke="#f2ea88" stroke-width="0.8" stroke-linecap="round" transform="translate(-0.4 -0.5)"/><path d="M697 607 Q712 598 728 614 Q749 641 775 680 Q800 725 840 740 Q875 748 902 748" fill="none" stroke="#a89a10" stroke-width="3.1" stroke-linecap="round"/><path d="M697 607 Q712 598 728 614 Q749 641 775 680 Q800 725 840 740 Q875 748 902 748" fill="none" stroke="#d8c820" stroke-width="2.3" stroke-linecap="round"/><path d="M697 607 Q712 598 728 614 Q749 641 775 680 Q800 725 840 740 Q875 748 902 748" fill="none" stroke="#f2ea88" stroke-width="0.8" stroke-linecap="round" transform="translate(-0.4 -0.5)"/><path d="M902 748 L960 753" fill="none" stroke="#a89a10" stroke-width="3.1" stroke-linecap="round"/><path d="M902 748 L960 753" fill="none" stroke="#d8c820" stroke-width="2.3" stroke-linecap="round"/><path d="M902 748 L960 753" fill="none" stroke="#f2ea88" stroke-width="0.8" stroke-linecap="round" transform="translate(-0.4 -0.5)"/><path d="M893 744 L916 746 L915 753 L892 751z" fill="#444"/><path d="M689 614 Q700 602 715 610 Q722 618 719 622" fill="none" stroke="#1d5aa8" stroke-width="4.4" stroke-linecap="round"/><path d="M689 614 Q700 602 715 610 Q722 618 719 622" fill="none" stroke="#3a8ad8" stroke-width="3.2" stroke-linecap="round"/><path d="M689 614 Q700 602 715 610 Q722 618 719 622" fill="none" stroke="#8cc8f4" stroke-width="1" stroke-linecap="round" transform="translate(-0.6 -0.6)"/><path d="M694 625 Q705 650 714 659 Q734 680 737 686 Q740 700 738 705" fill="none" stroke="#1d5aa8" stroke-width="4.4" stroke-linecap="round"/><path d="M694 625 Q705 650 714 659 Q734 680 737 686 Q740 700 738 705" fill="none" stroke="#3a8ad8" stroke-width="3.2" stroke-linecap="round"/><path d="M694 625 Q705 650 714 659 Q734 680 737 686 Q740 700 738 705" fill="none" stroke="#8cc8f4" stroke-width="1" stroke-linecap="round" transform="translate(-0.6 -0.6)"/><path d="M700 612 Q712 650 716 680 Q718 700 710 709" fill="none" stroke="#a89a10" stroke-width="2.8" stroke-linecap="round"/><path d="M700 612 Q712 650 716 680 Q718 700 710 709" fill="none" stroke="#d8c820" stroke-width="2.0" stroke-linecap="round"/><path d="M700 612 Q712 650 716 680 Q718 700 710 709" fill="none" stroke="#f2ea88" stroke-width="0.8" stroke-linecap="round" transform="translate(-0.4 -0.5)"/><path d="M618 847 Q630 838 641 832 Q648 815 650 800 Q655 790 664 789" fill="none" stroke="#a89a10" stroke-width="3.0" stroke-linecap="round"/><path d="M618 847 Q630 838 641 832 Q648 815 650 800 Q655 790 664 789" fill="none" stroke="#d8c820" stroke-width="2.2" stroke-linecap="round"/><path d="M618 847 Q630 838 641 832 Q648 815 650 800 Q655 790 664 789" fill="none" stroke="#f2ea88" stroke-width="0.8" stroke-linecap="round" transform="translate(-0.4 -0.5)"/><path d="M641 832 Q660 835 672 825 Q676 810 668 798 Q662 793 660 797" fill="none" stroke="#a89a10" stroke-width="2.8" stroke-linecap="round"/><path d="M641 832 Q660 835 672 825 Q676 810 668 798 Q662 793 660 797" fill="none" stroke="#d8c820" stroke-width="2.0" stroke-linecap="round"/><path d="M641 832 Q660 835 672 825 Q676 810 668 798 Q662 793 660 797" fill="none" stroke="#f2ea88" stroke-width="0.8" stroke-linecap="round" transform="translate(-0.4 -0.5)"/><path d="M432 619 Q435 607 439 612 Q437 621 432 619" fill="none" stroke="#d06020" stroke-width="1.1"/><path d="M540 604 Q543 592 547 597 Q545 606 540 604" fill="none" stroke="#d06020" stroke-width="1.1"/><path d="M560 589 Q563 577 567 582 Q565 591 560 589" fill="none" stroke="#d06020" stroke-width="1.1"/><path d="M942 752 Q945 740 949 745 Q947 754 942 752" fill="none" stroke="#d06020" stroke-width="1.1"/><path d="M704 614 Q707 602 711 607 Q709 616 704 614" fill="none" stroke="#d06020" stroke-width="1.1"/><path d="M917 787 Q960 785 985 808 L975 995 Q950 995 929 988 Q888 980 865 956 Q850 925 853 880 Q860 820 917 787z" fill="url(#brownR)"/><path d="M880 830 Q870 880 880 950" fill="none" stroke="#6a4236" stroke-width="1.2" opacity="0.7"/><path d="M953 819 L979 800 L1010 819 L1014 829 L1046 833 L1059.5 847 L1050 863 L1038 874.5 L1055.6 898 L1051.6 941.5 L1028 963 L998.5 957 L988.6 992.7 L974.8 1000.5 L929.5 988.7 L935.4 953 L915.8 931.6 L917.7 888.3 L929.5 882.4 L953 833z" fill="url(#hubw)"/><path d="M965 825 L996 828 L996 878 L968 880z" fill="#d6d2bd"/><path d="M917.7 890 L959 888 L959 932 L916 931.6z" fill="#d5d0bb"/><path d="M983 902 L1014 900 L1014 947 L985 950z" fill="#d2ccb2"/><path d="M953 819 L979 800 L1010 819 L983 826z" fill="#f4f2ea"/><ellipse cx="1034" cy="918" rx="22" ry="43" fill="#f0eee4" stroke="#c8c2aa" stroke-width="1"/><circle cx="1052.0" cy="918.0" r="2.4" fill="#8f8b7e"/><circle cx="1048.6" cy="939.7" r="2.4" fill="#8f8b7e"/><circle cx="1039.6" cy="953.2" r="2.4" fill="#8f8b7e"/><circle cx="1028.4" cy="953.2" r="2.4" fill="#8f8b7e"/><circle cx="1019.4" cy="939.7" r="2.4" fill="#8f8b7e"/><circle cx="1016.0" cy="918.0" r="2.4" fill="#8f8b7e"/><circle cx="1019.4" cy="896.3" r="2.4" fill="#8f8b7e"/><circle cx="1028.4" cy="882.8" r="2.4" fill="#8f8b7e"/><circle cx="1039.6" cy="882.8" r="2.4" fill="#8f8b7e"/><circle cx="1048.6" cy="896.3" r="2.4" fill="#8f8b7e"/><rect x="1005" y="825" width="12" height="4" fill="#777" transform="rotate(20 1011 827)"/><rect x="1052" y="847" width="12" height="4" fill="#777" transform="rotate(15 1058 849)"/><rect x="961" y="919" width="12" height="4" fill="#777" transform="rotate(15 967 921)"/><rect x="976" y="998" width="12" height="4" fill="#777" transform="rotate(20 982 1000)"/><circle cx="957" cy="870" r="3" fill="#9a9a90"/><circle cx="948" cy="946" r="3" fill="#9a9a90"/><path d="M184 1124 L184 1110 M184 1124 L197 1128 M184 1124 L174 1131" stroke-width="1.4" fill="none"/><path d="M184 1124 L184 1110" stroke="#2aa040" stroke-width="1.4"/><path d="M181 1113 L184 1107 L187 1113z" fill="#2aa040"/><path d="M184 1124 L194 1127" stroke="#d04040" stroke-width="1.4"/><path d="M184 1124 L176 1129" stroke="#5050d0" stroke-width="1.6"/><text x="182" y="1106" font-size="4.5" fill="#2aa040" font-family="Liberation Sans">Y</text><text x="198" y="1131" font-size="5" fill="#d04040" font-family="Liberation Sans">X</text><text x="170" y="1133" font-size="5" fill="#4040c0" font-family="Liberation Sans">Z</text></svg>
<div class="a" style="left:13px;top:502px;width:144px;height:15px;background:#e6e6e6;"></div>
<div class="t" style="left:15.8px;top:505.4px;font-size:8.62px;line-height:10px;color:#444;transform:scaleX(0.8929);transform-origin:0 50%;">Scene</div>
<svg class="a" style="left:133px;top:505px" width="22" height="10"><path d="M1.5 3h6l-3 3.5z" fill="#555"/><path d="M15 1.5h3v4h-3zM14 5.5h5M16.5 5.5v3" fill="none" stroke="#777" stroke-width="0.8"/></svg>
<div class="a" style="left:13px;top:518px;width:144px;height:13px;background:#fff;"></div>
<div class="t" style="left:16.5px;top:520.1px;font-size:8.40px;line-height:10px;color:#999;transform:scaleX(0.8929);transform-origin:0 50%;">Search ...</div>
<svg class="a" style="left:143px;top:519px" width="12" height="11"><path d="M1.5 1.5l8 8M9.5 1.5l-8 8" stroke="#e0502a" stroke-width="1.5"/></svg>
<div class="a" style="left:13px;top:531px;width:144px;height:603px;background:#fff;border:1px solid #bdbdbd;box-sizing:border-box"></div>
<div class="a" style="left:14px;top:1117px;width:142px;height:16px;background:#f0f0f0;"></div>
<div class="a" style="left:26px;top:1126.5px;width:117px;height:1.5px;background:#555;"></div>
<svg class="a" style="left:14px;top:532px" width="30" height="60" viewBox="0 0 30 60">
<path d="M2 3l4 2 4-3 2 3-4 3 4 2-3 3-6-4z" fill="#d42020"/>
<g stroke="#bbb" stroke-width="0.7" fill="#fff"><path d="M8 12v42"/><rect x="5" y="16" width="6" height="6"/><rect x="5" y="28" width="6" height="6"/><rect x="5" y="40" width="6" height="6"/><rect x="5" y="51" width="6" height="6"/></g>
<g stroke="#666" stroke-width="0.8"><path d="M6.5 19h3M8 17.5v3M6.5 31h3M8 29.5v3M6.5 43h3M8 41.5v3M6.5 54h3M8 52.5v3"/></g>
<path d="M20 14v7M16 21h8M20 21l-4 3M24 21l3 2" stroke="#111" stroke-width="1.1" fill="none"/>
<path d="M16 27l5-2 5 3v5l-5 2-5-3z" fill="#e9cc30" stroke="#335" stroke-width="0.6"/><path d="M18 27l4-1 3 2-4 2z" fill="#5aa0e0"/>
<rect x="16" y="40" width="10" height="7" rx="1" fill="#333"/><circle cx="18" cy="39" r="1.5" fill="#333"/><circle cx="23" cy="39" r="1.5" fill="#333"/>
<path d="M16 49l8 8M18 49l7 6" stroke="#4a7ad0" stroke-width="1"/><path d="M19 51l6 6" stroke="#e07040" stroke-width="1"/>
</svg>
<div class="t" style="left:29.9px;top:534.2px;font-size:8.62px;line-height:10px;color:#222;transform:scaleX(0.8929);transform-origin:0 50%;">C:\Users\Desktop\Axle.ics</div>
<div class="t" style="left:42.7px;top:545.9px;font-size:8.51px;line-height:10px;color:#222;transform:scaleX(0.8929);transform-origin:0 50%;">Global Coordinate System</div>
<div class="t" style="left:42.7px;top:557.6px;font-size:8.51px;line-height:10px;color:#222;transform:scaleX(0.8929);transform-origin:0 50%;">Assembly363</div>
<div class="t" style="left:42.7px;top:569.4px;font-size:8.51px;line-height:10px;color:#222;transform:scaleX(0.8929);transform-origin:0 50%;">Cameras</div>
<div class="t" style="left:42.7px;top:581.2px;font-size:8.51px;line-height:10px;color:#222;transform:scaleX(0.8929);transform-origin:0 50%;">Lights</div>
<div class="a" style="left:13px;top:1134px;width:144px;height:14px;background:#e6e6e6;"></div>
<div class="a" style="left:13.5px;top:1134px;width:38px;height:14px;background:#fff;border:1px solid #ccc;border-top:none;box-sizing:border-box"></div>
<svg class="a" style="left:16px;top:1135px" width="130" height="12" viewBox="0 0 130 12">
<path d="M4 2l2 0 1 2v6h-5v-6z" fill="#dfe8ef" stroke="#9ab" stroke-width="0.6"/>
<rect x="41" y="1" width="7" height="10" fill="#fff" stroke="#8a9aaa" stroke-width="0.6"/><rect x="42" y="1.5" width="5" height="3" fill="#3a6ab0"/>
<circle cx="96" cy="5" r="3.3" fill="none" stroke="#777" stroke-width="1"/><path d="M98.5 7.5l3 3" stroke="#333" stroke-width="1.5"/>
</svg>
<div class="t" style="left:27.8px;top:1136.2px;font-size:8.62px;line-height:10px;color:#444;transform:scaleX(0.8929);transform-origin:0 50%;">Scene</div>
<div class="t" style="left:66.7px;top:1136.4px;font-size:8.51px;line-height:10px;color:#444;transform:scaleX(0.8929);transform-origin:0 50%;">Properties</div>
<div class="t" style="left:120.4px;top:1136.4px;font-size:8.51px;line-height:10px;color:#444;transform:scaleX(0.8929);transform-origin:0 50%;">Search</div>
<div class="a" style="left:1133px;top:487px;width:134px;height:16px;background:#e6e6e6;"></div>
<div class="t" style="left:1135.7px;top:490.9px;font-size:8.62px;line-height:10px;color:#444;transform:scaleX(0.8929);transform-origin:0 50%;">Add Shapes</div>
<svg class="a" style="left:1242px;top:491px" width="24" height="10"><path d="M1.5 3h6l-3 3.5z" fill="#555"/><path d="M15.5 1.5h3v4h-3zM14.5 5.5h5M17 5.5v3" fill="none" stroke="#777" stroke-width="0.8"/></svg>
<div class="a" style="left:1134.5px;top:504px;width:29.90000000000009px;height:12px;background:#fafafa;border-radius:2px"></div>
<div class="t" style="left:1145.5px;top:505.8px;font-size:8.29px;line-height:10px;color:#222;transform:scaleX(0.8929);transform-origin:0 50%;">New</div>
<div class="a" style="left:1169.5px;top:504px;width:28.799999999999955px;height:12px;background:#fafafa;border-radius:2px"></div>
<div class="t" style="left:1179.5px;top:505.8px;font-size:8.29px;line-height:10px;color:#222;transform:scaleX(0.8929);transform-origin:0 50%;">Open</div>
<div class="a" style="left:1203.7px;top:504px;width:27.700000000000045px;height:12px;background:#fafafa;border-radius:2px"></div>
<div class="t" style="left:1214px;top:505.8px;font-size:8.29px;line-height:10px;color:#222;transform:scaleX(0.8929);transform-origin:0 50%;">Save</div>
<div class="a" style="left:1235px;top:504px;width:30px;height:12px;background:#fafafa;border-radius:2px"></div>
<div class="t" style="left:1246px;top:505.8px;font-size:8.29px;line-height:10px;color:#222;transform:scaleX(0.8929);transform-origin:0 50%;">Close</div>
<svg class="a" style="left:1134px;top:504px" width="132" height="12" viewBox="0 0 132 12">
<rect x="3" y="1.5" width="7" height="9" fill="#fff" stroke="#777" stroke-width="0.7"/><path d="M4.5 5h4M4.5 7.5h4" stroke="#888" stroke-width="0.6"/>
<rect x="38" y="1.5" width="7" height="9" fill="#f4f4f4" stroke="#888" stroke-width="0.7"/><path d="M40.5 1.5v9" stroke="#999" stroke-width="0.6"/>
<rect x="72" y="2" width="8" height="8" fill="#6a7a3a"/><rect x="73.5" y="2" width="5" height="3" fill="#dde"/>
<rect x="104" y="1.5" width="7" height="9" fill="#eee" stroke="#999" stroke-width="0.7"/>
</svg>
<div class="a" style="left:1133px;top:517px;width:133px;height:14px;background:#fff;"></div>
<div class="t" style="left:1136px;top:519.8px;font-size:8.40px;line-height:10px;color:#999;transform:scaleX(0.8929);transform-origin:0 50%;">Search ...</div>
<svg class="a" style="left:1254px;top:518px" width="12" height="12"><path d="M1.5 1.5l8 8M9.5 1.5l-8 8" stroke="#e0502a" stroke-width="1.5"/></svg>
<div class="a" style="left:1132.8px;top:530.5px;width:134px;height:441px;background:#fff;border:1px solid #bdbdbd;box-sizing:border-box"></div>
<div class="a" style="left:1255px;top:531.5px;width:10.5px;height:439px;background:#f3f3f3;"></div>
<div class="a" style="left:1259.5px;top:541px;width:1.5px;height:350px;background:#666;"></div>
<svg class="a" style="left:1146px;top:530.5px" width="24" height="24" viewBox="0 0 24 24"><circle cx="12" cy="12" r="9" fill="#111"/><path d="M9 7l7 5-7 5z" fill="#fff"/></svg>
<div class="t" style="left:1128.0px;width:60px;text-align:center;top:556.0px;font-size:8.40px;line-height:10px;color:#333;transform:scaleX(0.8929);transform-origin:50% 50%;">How To</div>
<svg class="a" style="left:1195px;top:530.5px" width="24" height="24" viewBox="0 0 24 24"><path d="M5 6l8-3 7 3v10l-7 4-8-4z" fill="#c5d8d4"/><path d="M5 6l8-3 7 3-7 3z" fill="#e2ece9"/><path d="M13 9v11l7-4V6z" fill="#a9c2bd"/></svg>
<div class="t" style="left:1177.0px;width:60px;text-align:center;top:556.0px;font-size:8.40px;line-height:10px;color:#333;transform:scaleX(0.8929);transform-origin:50% 50%;">Block</div>
<svg class="a" style="left:1146px;top:579.5px" width="24" height="24" viewBox="0 0 24 24"><path d="M4 4l5 12 11 3-6-13z" fill="#c8dcd8"/><path d="M9 16l11 3v1l-11-3z" fill="#8fa9a4"/></svg>
<div class="t" style="left:1128.0px;width:60px;text-align:center;top:605.0px;font-size:8.40px;line-height:10px;color:#333;transform:scaleX(0.8929);transform-origin:50% 50%;">Slab</div>
<svg class="a" style="left:1195px;top:579.5px" width="24" height="24" viewBox="0 0 24 24"><path d="M5 6a7 3 0 0 1 14 0v10a7 3 0 0 1-14 0z" fill="#bdd2ce"/><ellipse cx="12" cy="6" rx="7" ry="3" fill="#e0ebe8"/><path d="M13 8v12l6-3V6z" fill="#a4bdb8"/></svg>
<div class="t" style="left:1177.0px;width:60px;text-align:center;top:605.0px;font-size:8.40px;line-height:10px;color:#333;transform:scaleX(0.8929);transform-origin:50% 50%;">Slot</div>
<svg class="a" style="left:1146px;top:628.5px" width="24" height="24" viewBox="0 0 24 24"><path d="M5 7v9a7 3 0 0 0 14 0V7z" fill="#b7cdc9"/><ellipse cx="12" cy="7" rx="7" ry="3" fill="#e3edea"/></svg>
<div class="t" style="left:1128.0px;width:60px;text-align:center;top:654.0px;font-size:8.40px;line-height:10px;color:#333;transform:scaleX(0.8929);transform-origin:50% 50%;">Cylinder</div>
<svg class="a" style="left:1195px;top:628.5px" width="24" height="24" viewBox="0 0 24 24"><path d="M5 9v8a7 4 0 0 0 14-2V7z" fill="#b3cac5"/><ellipse cx="12" cy="8" rx="7" ry="3.5" transform="rotate(-15 12 8)" fill="#e3edea"/></svg>
<div class="t" style="left:1177.0px;width:60px;text-align:center;top:654.0px;font-size:8.40px;line-height:10px;color:#333;transform:scaleX(0.8929);transform-origin:50% 50%;">Ellipse</div>
<svg class="a" style="left:1146px;top:677.5px" width="24" height="24" viewBox="0 0 24 24"><path d="M4 8l6-5 9 2-1 9-8 6-5-5z" fill="#c4d8d4"/><path d="M4 8l6-5 9 2-9 5z" fill="#e3ece9"/><path d="M10 10l8-5-1 9-8 6z" fill="#a9c1bc"/></svg>
<div class="t" style="left:1128.0px;width:60px;text-align:center;top:703.0px;font-size:8.40px;line-height:10px;color:#333;transform:scaleX(0.8929);transform-origin:50% 50%;">Poly</div>
<svg class="a" style="left:1195px;top:677.5px" width="24" height="24" viewBox="0 0 24 24"><circle cx="12" cy="12" r="8" fill="#9dbcb8"/><circle cx="10" cy="10" r="5" fill="#d5e6e3"/><circle cx="9" cy="9" r="2" fill="#fff"/></svg>
<div class="t" style="left:1177.0px;width:60px;text-align:center;top:703.0px;font-size:8.40px;line-height:10px;color:#333;transform:scaleX(0.8929);transform-origin:50% 50%;">Sphere</div>
<svg class="a" style="left:1146px;top:726.5px" width="24" height="24" viewBox="0 0 24 24"><path d="M4 6l12-2 3 8-7 8-8-5z" fill="#c1d6d2"/><path d="M12 20l7-8v3l-7 7z" fill="#95aea9"/></svg>
<div class="t" style="left:1128.0px;width:60px;text-align:center;top:752.0px;font-size:8.40px;line-height:10px;color:#333;transform:scaleX(0.8929);transform-origin:50% 50%;">Pie</div>
<svg class="a" style="left:1195px;top:726.5px" width="24" height="24" viewBox="0 0 24 24"><circle cx="12" cy="12" r="8" fill="none" stroke="#a9c4c0" stroke-width="4"/><circle cx="12" cy="12" r="8" fill="none" stroke="#d5e5e2" stroke-width="1.5"/></svg>
<div class="t" style="left:1177.0px;width:60px;text-align:center;top:752.0px;font-size:8.40px;line-height:10px;color:#333;transform:scaleX(0.8929);transform-origin:50% 50%;">Torus</div>
<svg class="a" style="left:1146px;top:775.5px" width="24" height="24" viewBox="0 0 24 24"><path d="M4 15l14-11 2 5-10 10z" fill="#b9cfcb"/><path d="M10 19l10-10 1 2-10 9z" fill="#8fa8a3"/></svg>
<div class="t" style="left:1128.0px;width:60px;text-align:center;top:801.0px;font-size:8.40px;line-height:10px;color:#333;transform:scaleX(0.8929);transform-origin:50% 50%;">Cone</div>
<svg class="a" style="left:1195px;top:775.5px" width="24" height="24" viewBox="0 0 24 24"><path d="M12 3l8 16H4z" fill="#b0c7c2"/><path d="M12 3l8 16h-6z" fill="#7f9994"/></svg>
<div class="t" style="left:1177.0px;width:60px;text-align:center;top:801.0px;font-size:8.40px;line-height:10px;color:#333;transform:scaleX(0.8929);transform-origin:50% 50%;">Pyramid</div>
<svg class="a" style="left:1146px;top:824.5px" width="24" height="24" viewBox="0 0 24 24"><path d="M4 8a8 4 0 0 1 16 0l-2 10a6 3 0 0 1-12 0z" fill="#b9cfcb"/><ellipse cx="12" cy="8" rx="8" ry="3.5" fill="#dce9e6"/></svg>
<div class="t" style="left:1128.0px;width:60px;text-align:center;top:850.0px;font-size:8.40px;line-height:10px;color:#333;transform:scaleX(0.8929);transform-origin:50% 50%;">Part Cone</div>
<svg class="a" style="left:1195px;top:824.5px" width="24" height="24" viewBox="0 0 24 24"><path d="M6 5l10-2 3 6-6 11-3-1z" fill="#c0d5d1"/><path d="M13 20l6-11v2l-6 10z" fill="#90aaa5"/></svg>
<div class="t" style="left:1177.0px;width:60px;text-align:center;top:850.0px;font-size:8.40px;line-height:10px;color:#333;transform:scaleX(0.8929);transform-origin:50% 50%;">Bar</div>
<svg class="a" style="left:1146px;top:873.5px" width="24" height="24" viewBox="0 0 24 24"><path d="M4 4l14 10-2 5L5 9z" fill="#bcd1cd"/><path d="M16 19l2-5 2 2-2 4z" fill="#8ea8a3"/></svg>
<div class="t" style="left:1128.0px;width:60px;text-align:center;top:899.0px;font-size:8.40px;line-height:10px;color:#333;transform:scaleX(0.8929);transform-origin:50% 50%;">Rib</div>
<svg class="a" style="left:1195px;top:873.5px" width="24" height="24" viewBox="0 0 24 24"><path d="M6 14a7 7 0 0 1 14-6l-4 6-3 6z" fill="#bfd5d1"/><path d="M7 8a6 6 0 0 1 11 2" fill="none" stroke="#8fb0aa" stroke-width="1.5"/></svg>
<div class="t" style="left:1177.0px;width:60px;text-align:center;top:899.0px;font-size:8.40px;line-height:10px;color:#333;transform:scaleX(0.8929);transform-origin:50% 50%;">L3 Circles</div>
<svg class="a" style="left:1146px;top:922.5px" width="24" height="24" viewBox="0 0 24 24"><path d="M6 7l12-3-2 6 3 4-7 6-6-5z" fill="#b6ccc8"/><path d="M8 13l8-3 3 4-7 6z" fill="#94aeaa"/></svg>
<div class="t" style="left:1128.0px;width:60px;text-align:center;top:948.0px;font-size:8.40px;line-height:10px;color:#333;transform:scaleX(0.8929);transform-origin:50% 50%;">Twist</div>
<svg class="a" style="left:1195px;top:922.5px" width="24" height="24" viewBox="0 0 24 24"><path d="M6 8l12-6-2 18H5z" fill="#bcd3cf"/><path d="M12 20l1-6h1l-1 6z" fill="#c03030"/></svg>
<div class="t" style="left:1177.0px;width:60px;text-align:center;top:948.0px;font-size:8.40px;line-height:10px;color:#333;transform:scaleX(0.8929);transform-origin:50% 50%;">Slab2</div>
<div class="a" style="left:1133px;top:971px;width:134px;height:14px;background:#e8e8e8;"></div>
<svg class="a" style="left:1137px;top:974px" width="12" height="9"><path d="M1 4.5l4-3.5v2h6v3H5v2z" fill="#aaa"/></svg>
<div class="t" style="left:1150.8px;top:974.2px;font-size:8.40px;line-height:10px;color:#9a9a9a;transform:scaleX(0.8929);transform-origin:0 50%;">Back</div>
<div class="a" style="left:1173px;top:974px;width:77px;height:10px;background:#fff;"></div>
<div class="t" style="left:1171.5px;width:80px;text-align:center;top:974.2px;font-size:8.29px;line-height:10px;color:#222;transform:scaleX(0.8929);transform-origin:50% 50%;">More Catalogs</div>
<div class="a" style="left:1133px;top:985px;width:134px;height:15px;background:#e8e8e8;"></div>
<div class="a" style="left:1134px;top:985px;width:46px;height:13.5px;background:#fff;"></div>
<div class="t" style="left:1137px;top:987.4px;font-size:8.62px;line-height:10px;color:#444;transform:scaleX(0.8929);transform-origin:0 50%;">Add Shapes</div>
<div class="t" style="left:1185.6px;top:987.5px;font-size:8.40px;line-height:10px;color:#444;transform:scaleX(0.8929);transform-origin:0 50%;">Advshaps2</div>
<div class="t" style="left:1231.9px;top:987.5px;font-size:8.40px;line-height:10px;color:#444;transform:scaleX(0.8929);transform-origin:0 50%;">Other</div>
<svg class="a" style="left:1256px;top:988px" width="9" height="8"><path d="M1 1.5h7M1 3.5h7l-3.5 4z" fill="#666" stroke="#666" stroke-width="0.5"/></svg>
<div class="a" style="left:1133px;top:1000px;width:134px;height:5px;background:#e1e1e1;"></div>
<div class="a" style="left:1133px;top:1005px;width:134px;height:14.5px;background:#e6e6e6;"></div>
<div class="t" style="left:1135.7px;top:1007.4px;font-size:8.62px;line-height:10px;color:#444;transform:scaleX(0.8929);transform-origin:0 50%;">Object Viewer</div>
<svg class="a" style="left:1230px;top:1007px" width="36" height="10"><path d="M1.5 3.5h6l-3 3.5z" fill="#555"/><path d="M15.5 1.5h3v4h-3zM14.5 5.5h5M17 5.5v3" fill="none" stroke="#777" stroke-width="0.8"/><path d="M26 2l5 5M31 2l-5 5" stroke="#555" stroke-width="1"/></svg>
<div class="a" style="left:1133px;top:1019.5px;width:134px;height:114.5px;background:#fff;"></div>
<div class="a" style="left:1133px;top:1134px;width:134px;height:14px;background:#e6e6e6;"></div>
<div class="a" style="left:1133.5px;top:1134px;width:54px;height:14px;background:#fff;border:1px solid #ccc;border-top:none;box-sizing:border-box"></div>
<div class="t" style="left:1137px;top:1136.2px;font-size:8.51px;line-height:10px;color:#444;transform:scaleX(0.8929);transform-origin:0 50%;">Object Viewer</div>
<div class="t" style="left:1193px;top:1136.4px;font-size:8.51px;line-height:10px;color:#444;transform:scaleX(0.8929);transform-origin:0 50%;">Property List</div>
<div class="t" style="left:14.7px;top:1152.4px;font-size:8.62px;line-height:10px;color:#333;transform:scaleX(0.8929);transform-origin:0 50%;">For Help, press F1</div>
<div class="t" style="left:648px;top:1152.4px;font-size:8.51px;line-height:10px;color:#444;transform:scaleX(0.8929);transform-origin:0 50%;letter-spacing:-0.2px">View size: 1479 x  944</div>
<svg class="a" style="left:735px;top:1150px" width="300" height="15" viewBox="0 0 300 15">
<rect x="6" y="2" width="3.5" height="10" fill="#f0c040"/><rect x="3" y="3" width="3" height="1.5" fill="#e0a020"/>
<circle cx="85" cy="6" r="3.3" fill="none" stroke="#666" stroke-width="1"/><path d="M87.5 8.5l3 3" stroke="#444" stroke-width="1.5"/>
<circle cx="99" cy="6" r="3.3" fill="none" stroke="#666" stroke-width="1"/><path d="M101.5 8.5l3 3" stroke="#444" stroke-width="1.5"/>
<path d="M109 6l1.5 1.5 1.5-1.5" fill="none" stroke="#555" stroke-width="0.8"/>
<path d="M124 2v8M120 11h8" stroke="#2a5ab0" stroke-width="1.2"/>
<path d="M135 5l4-2 5 3v5l-5 2-4-3z" fill="#f0c030" stroke="#886" stroke-width="0.5"/>
<path d="M147 6l1.5 1.5 1.5-1.5" fill="none" stroke="#555" stroke-width="0.8"/>
<path d="M158 4l6-2 4 2v8l-6 2-4-2z" fill="#3a78d0"/>
<path d="M171 6l1.5 1.5 1.5-1.5" fill="none" stroke="#555" stroke-width="0.8"/>
<path d="M181 6h4M187 4h5v7h-5z" fill="#444" stroke="#333" stroke-width="0.8"/>
<path d="M195 6l1.5 1.5 1.5-1.5" fill="none" stroke="#555" stroke-width="0.8"/>
<rect x="198" y="0" width="14" height="14" fill="#c8d8ee" stroke="#5a7ab0" stroke-width="0.8"/><path d="M201 11l3-8h6l-3 8z" fill="#fff" stroke="#446" stroke-width="0.6"/>
<path d="M216 11l3-7 4 1 2 5" fill="none" stroke="#aaa" stroke-width="0.8"/>
<path d="M227 6l1.5 1.5 1.5-1.5" fill="none" stroke="#555" stroke-width="0.8"/>
<path d="M239 4l6-2 4 2v8l-6 2-4-2z" fill="#3a78d0"/>
<path d="M252 6l1.5 1.5 1.5-1.5" fill="none" stroke="#555" stroke-width="0.8"/>
<path d="M259 10l4-6 3 3" fill="none" stroke="#ccc" stroke-width="1"/>
<rect x="273" y="0" width="14" height="14" fill="#e4e4e4" stroke="#777" stroke-width="0.8"/><path d="M277 3l6 5-3 0 1 4-1 0-2-3-1 2z" fill="#fff" stroke="#333" stroke-width="0.6"/>
<path d="M293 4l4 5-2 0 1 3" fill="#fff" stroke="#444" stroke-width="0.6"/>
</svg>
<div class="t" style="left:746.5px;top:1152.4px;font-size:8.51px;line-height:10px;color:#222;transform:scaleX(0.8929);transform-origin:0 50%;font-weight:bold;letter-spacing:-0.2px">Units:</div>
<div class="t" style="left:774px;top:1152.4px;font-size:8.51px;line-height:10px;color:#444;transform:scaleX(0.8929);transform-origin:0 50%;">in, deg</div>
<div class="a" style="left:1040px;top:1151px;width:91px;height:12px;background:#fff;border:1px solid #e0e0e0;box-sizing:border-box"></div>
<div class="t" style="left:1042px;top:1152.7px;font-size:8.51px;line-height:10px;color:#222;transform:scaleX(0.8929);transform-origin:0 50%;">Any</div>
<svg class="a" style="left:1124px;top:1156px" width="5" height="3"><path d="M0 0h4l-2 2.5z" fill="#555"/></svg>
<div class="a" style="left:1131px;top:1151px;width:118px;height:12px;background:#fff;border:1px solid #e0e0e0;box-sizing:border-box"></div>
<div class="t" style="left:1133px;top:1152.7px;font-size:8.51px;line-height:10px;color:#222;transform:scaleX(0.8929);transform-origin:0 50%;">Default</div>
<svg class="a" style="left:1243px;top:1156px" width="5" height="3"><path d="M0 0h4l-2 2.5z" fill="#555"/></svg>
<svg class="a" style="left:1252px;top:1151px" width="12" height="12"><rect x="3" y="1" width="4" height="4" fill="#d03030"/><path d="M1 10l3-4 3 4M5 10l3-4 3 4" fill="none" stroke="#4a7ac0" stroke-width="1"/></svg>
</body></html>
